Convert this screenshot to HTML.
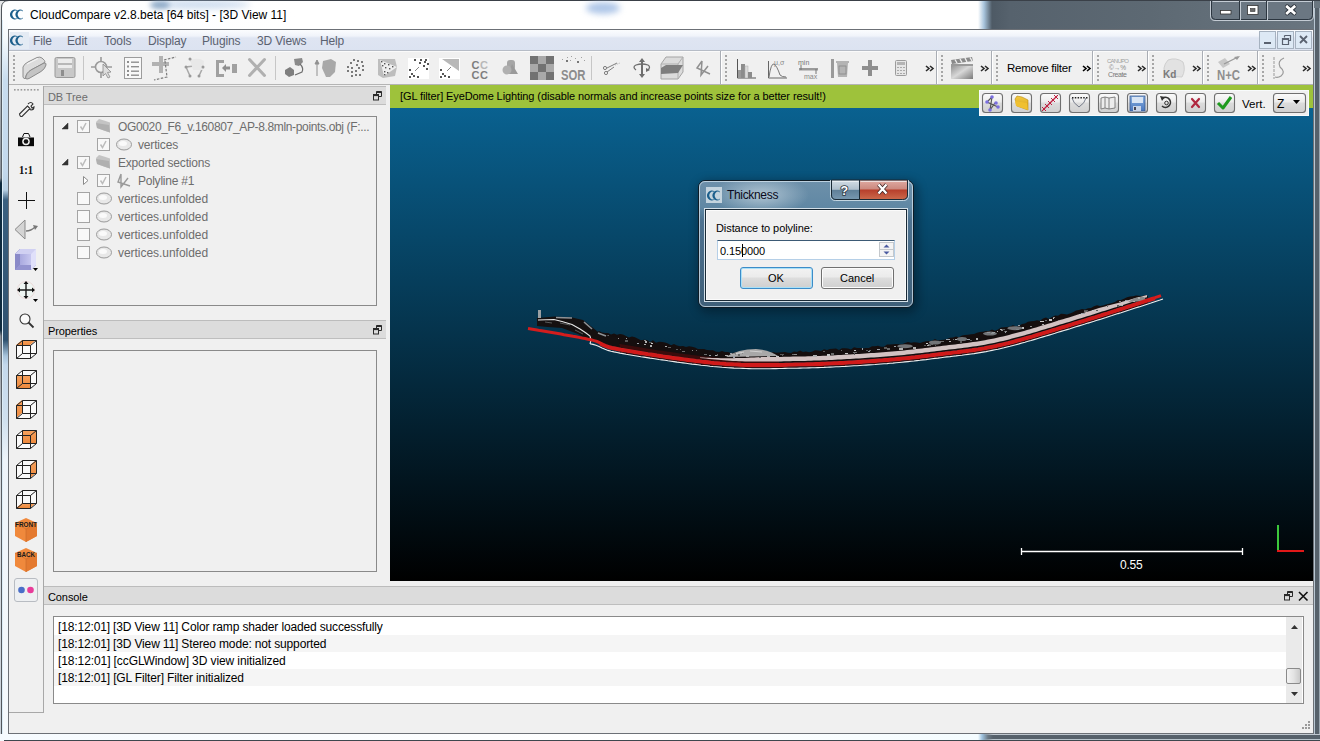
<!DOCTYPE html>
<html><head><meta charset="utf-8">
<style>
*{box-sizing:border-box;margin:0;padding:0}
html,body{width:1320px;height:741px;overflow:hidden;background:#f4f8fc;font-family:"Liberation Sans",sans-serif;font-size:11px;color:#000}
.a{position:absolute}
.t{position:absolute;white-space:nowrap;line-height:1}
</style></head><body>
<!-- desktop / frame -->
<div class="a" style="left:0;top:0;width:1320px;height:741px;background:linear-gradient(90deg,#fdfeff 0,#ffffff 300px,#ffffff 978px,#a8c4dc 984px,#4e5a65 992px,#56626d 1010px,#5d6973 1150px,#6a7680 1320px)"></div>
<div class="a" style="left:0;top:0;width:1px;height:741px;background:linear-gradient(180deg,#e4e6e8 0,#a0a6ac 120px,#8a9098 178px,#0e2a3e 183px,#0e2a3e 330px,#8a9098 336px,#c0c6cc 420px,#d8dde2 500px,#c8d0d8 741px)"></div>
<div class="a" style="left:1px;top:0;width:1px;height:741px;background:linear-gradient(180deg,#50555a 0,#5a6068 178px,#0e2a3e 183px,#0e2a3e 330px,#5a6068 336px,#50555a 741px)"></div>
<svg class="a" style="left:0;top:0" width="9" height="9" viewBox="0 0 9 9"><path d="M0,0 H9 V0.5 Q1.5,0.5 1.5,8 V9 H0 Z" fill="#e4e6e8"/><path d="M9,0.5 Q1.5,0.5 1.5,8 V9" fill="none" stroke="#50555a" stroke-width="1"/></svg>
<div class="a" style="left:2px;top:20px;width:1px;height:714px;background:#dcecf6"></div><div class="a" style="left:3px;top:20px;width:5px;height:714px;background:linear-gradient(180deg,#fbfdff 0,#f4f9fc 20px,#c8dcee 60px,#c4d8ec 150px,#b8d0e4 170px,#3a6080 180px,#2f5270 320px,#a8c4dc 336px,#c4d8ec 345px,#d0e0ee 400px,#eef4fa 440px,#f6fafd 714px)"></div>
<div class="a" style="left:0;top:0;width:1320px;height:1px;background:#3a4048"></div>
<div class="a" style="left:1314px;top:8px;width:6px;height:726px;background:linear-gradient(90deg,#b8c6d2 0,#b8c6d2 1px,#56616b 1px,#56616b 5px,#9aa6b0 5px)"></div>
<div class="a" style="left:0;top:734px;width:1320px;height:7px;background:linear-gradient(90deg,#f6fbff 0,#ffffff 640px,#f4fcff 978px,#a0c4e0 982px,#6a7884 988px,#56616b 993px,#56616b 1320px)"></div>
<div class="a" style="left:983px;top:734px;width:337px;height:1px;background:linear-gradient(90deg,rgba(190,200,210,0),#c0c8d0 10px)"></div>
<div class="a" style="left:983px;top:739px;width:337px;height:1px;background:linear-gradient(90deg,rgba(190,200,210,0),#b8c4cc 10px)"></div>
<div class="a" style="left:4px;top:740px;width:1316px;height:1px;background:#3e474e"></div>

<!-- title bar -->
<div class="a" style="left:150px;top:0px;width:100px;height:9px;border-radius:50%;background:rgba(170,195,225,0.55);filter:blur(3px)"></div>
<div class="a" style="left:150px;top:1px;width:20px;height:8px;border-radius:50%;background:rgba(90,130,170,0.6);filter:blur(2.5px)"></div>
<div class="a" style="left:586px;top:2px;width:34px;height:12px;border-radius:50%;background:rgba(160,188,228,0.85);filter:blur(3px)"></div>
<svg width="0" height="0" style="position:absolute"><defs><symbol id="cc" viewBox="0 0 15 11"><path d="M7.4,1.2 A4.5,5 0 1 0 7.4,8.8 L7.4,7.9 A3.1,3.9 0 1 1 7.4,2.1 Z" fill="#1b5f8c" transform="translate(0.2,0.5)"/><path d="M7.4,1.2 A4.5,5 0 1 0 7.4,8.8 L7.4,7.9 A3.1,3.9 0 1 1 7.4,2.1 Z" fill="#1b5f8c" transform="translate(5.6,0.5)"/></symbol></defs></svg>
<svg class="a" style="left:10px;top:9px" width="15" height="11"><use href="#cc"/></svg>
<svg class="a" style="left:1208px;top:0" width="108" height="23" viewBox="1208 0 108 23">
<path d="M1210.5,1 V16 Q1210.5,20.5 1215,20.5 H1309 Q1313.5,20.5 1313.5,16 V1" fill="#6b7782" stroke="#c4ccd4" stroke-width="1"/>
<path d="M1211.5,1 V15.5 Q1211.5,19.5 1215.5,19.5 H1308.5 Q1312.5,19.5 1312.5,15.5 V1" fill="none" stroke="#2c3640" stroke-width="1"/>
<path d="M1212.5,1.5 H1312" stroke="#c4ccd4" stroke-width="1"/>
<rect x="1239" y="1" width="1" height="19" fill="#2c3640"/><rect x="1240" y="1" width="1" height="19" fill="#c4ccd4"/>
<rect x="1266" y="1" width="1" height="19" fill="#2c3640"/><rect x="1267" y="1" width="1" height="19" fill="#c4ccd4"/>
<rect x="1220.5" y="10.5" width="10.5" height="3.5" fill="#fff" stroke="#333" stroke-width=".8"/>
<rect x="1247.5" y="5.5" width="10.5" height="9" fill="#fff" stroke="#333" stroke-width=".8"/><rect x="1250.5" y="8.5" width="4.5" height="3" fill="#6a6a6a" stroke="#333" stroke-width=".6"/>
<path d="M1287.2,6.8 L1294.2,13 M1294.2,6.8 L1287.2,13" stroke="#2a3038" stroke-width="4.6" stroke-linecap="round"/>
<path d="M1287.2,6.8 L1294.2,13 M1294.2,6.8 L1287.2,13" stroke="#fff" stroke-width="2.8" stroke-linecap="square"/>
</svg>
<div class="t" style="left:30px;top:9px;font-size:12px;color:#000">CloudCompare v2.8.beta [64 bits] - [3D View 11]</div>

<!-- MDI window -->
<div class="a" style="left:8px;top:29px;width:1306px;height:705px;border:1px solid #6c7076;background:#f0f0f0"></div>
<!-- menu bar -->
<div class="a" style="left:9px;top:30px;width:1304px;height:20px;background:linear-gradient(180deg,#fbfcfe 0,#f0f3fa 6px,#dfe5f2 8px,#dce3f1 20px)"></div>
<div class="a" style="left:9px;top:50px;width:1304px;height:1px;background:#b6bcc6"></div>
<div class="a" style="left:10px;top:32px;width:19px;height:17px;background:#e4ebf4"></div>
<svg class="a" style="left:10px;top:35px" width="15" height="11"><use href="#cc"/></svg>
<svg class="a" style="left:1258px;top:30px" width="55" height="20" viewBox="1258 30 55 20">
<rect x="1259.5" y="31.5" width="16" height="17" fill="#dde9f5" stroke="#a6b2c0"/>
<rect x="1277.5" y="31.5" width="16" height="17" fill="#dde9f5" stroke="#a6b2c0"/>
<rect x="1295.5" y="31.5" width="16" height="17" fill="#dde9f5" stroke="#a6b2c0"/>
<rect x="1264" y="42" width="7" height="2" fill="#5a6270"/>
<path d="M1284.5,35.5 H1290.5 V40.5 H1288.5 M1284.5,37.5 V35.5 M1282.5,38.5 H1288.5 V44.5 H1282.5 Z M1282.5,39.5 H1288.5" stroke="#5a6270" stroke-width="1.2" fill="none"/>
<path d="M1300,36 L1307,43 M1307,36 L1300,43" stroke="#5a6270" stroke-width="1.8"/>
</svg>
<div class="t" style="left:33px;top:35px;font-size:12px;letter-spacing:-0.15px;color:#5b6270">File</div>
<div class="t" style="left:67px;top:35px;font-size:12px;letter-spacing:-0.15px;color:#5b6270">Edit</div>
<div class="t" style="left:104px;top:35px;font-size:12px;letter-spacing:-0.15px;color:#5b6270">Tools</div>
<div class="t" style="left:148px;top:35px;font-size:12px;letter-spacing:-0.15px;color:#5b6270">Display</div>
<div class="t" style="left:202px;top:35px;font-size:12px;letter-spacing:-0.15px;color:#5b6270">Plugins</div>
<div class="t" style="left:257px;top:35px;font-size:12px;letter-spacing:-0.15px;color:#5b6270">3D Views</div>
<div class="t" style="left:320px;top:35px;font-size:12px;letter-spacing:-0.15px;color:#5b6270">Help</div>

<!-- toolbar -->
<div class="a" style="left:9px;top:51px;width:1304px;height:33px;background:#f0f0f0"></div>
<div class="a" style="left:9px;top:84px;width:1304px;height:1px;background:#b4b4b4"></div>
<svg class="a" style="left:0;top:0" width="1320" height="90" viewBox="0 0 1320 90">
<defs>
<pattern id="gripx" width="4" height="4" patternUnits="userSpaceOnUse" x="0" y="55"><rect x="0" y="0" width="2" height="2" fill="#9a9a9a"/><rect x="0" y="2" width="1" height="1" fill="#fff"/></pattern>
<linearGradient id="gfold" x1="0" y1="0" x2="0" y2="1"><stop offset="0" stop-color="#e6e6e6"/><stop offset="1" stop-color="#a6a6a6"/></linearGradient>
<linearGradient id="gclap" x1="0" y1="0" x2="1" y2="1"><stop offset="0" stop-color="#8a8a8a"/><stop offset=".5" stop-color="#d8d8d8"/><stop offset="1" stop-color="#7a7a7a"/></linearGradient>
</defs>
<!-- toolbar top white line -->
<rect x="9" y="51" width="1304" height="1" fill="#fafafa"/>
<!-- toolbar boundaries -->
<g fill="#a9adb4">
<rect x="720" y="51" width="1" height="33"/><rect x="936" y="51" width="1" height="33"/><rect x="991" y="51" width="1" height="33"/><rect x="1092" y="51" width="1" height="33"/><rect x="1147" y="51" width="1" height="33"/><rect x="1202" y="51" width="1" height="33"/><rect x="1257" y="51" width="1" height="33"/>
</g>
<g fill="#ffffff">
<rect x="721" y="52" width="1" height="32"/><rect x="937" y="52" width="1" height="32"/><rect x="992" y="52" width="1" height="32"/><rect x="1093" y="52" width="1" height="32"/><rect x="1148" y="52" width="1" height="32"/><rect x="1203" y="52" width="1" height="32"/><rect x="1258" y="52" width="1" height="32"/>
</g>
<!-- grips -->
<g fill="#a6a6a6">
<path d="M13 55h2v2h-2zM13 59h2v2h-2zM13 63h2v2h-2zM13 67h2v2h-2zM13 71h2v2h-2zM13 75h2v2h-2zM13 79h2v2h-2z"/>
<path d="M725 55h2v2h-2zM725 59h2v2h-2zM725 63h2v2h-2zM725 67h2v2h-2zM725 71h2v2h-2zM725 75h2v2h-2zM725 79h2v2h-2z"/>
<path d="M941 55h2v2h-2zM941 59h2v2h-2zM941 63h2v2h-2zM941 67h2v2h-2zM941 71h2v2h-2zM941 75h2v2h-2zM941 79h2v2h-2z"/>
<path d="M996 55h2v2h-2zM996 59h2v2h-2zM996 63h2v2h-2zM996 67h2v2h-2zM996 71h2v2h-2zM996 75h2v2h-2zM996 79h2v2h-2z"/>
<path d="M1097 55h2v2h-2zM1097 59h2v2h-2zM1097 63h2v2h-2zM1097 67h2v2h-2zM1097 71h2v2h-2zM1097 75h2v2h-2zM1097 79h2v2h-2z"/>
<path d="M1152 55h2v2h-2zM1152 59h2v2h-2zM1152 63h2v2h-2zM1152 67h2v2h-2zM1152 71h2v2h-2zM1152 75h2v2h-2zM1152 79h2v2h-2z"/>
<path d="M1207 55h2v2h-2zM1207 59h2v2h-2zM1207 63h2v2h-2zM1207 67h2v2h-2zM1207 71h2v2h-2zM1207 75h2v2h-2zM1207 79h2v2h-2z"/>
<path d="M1262 55h2v2h-2zM1262 59h2v2h-2zM1262 63h2v2h-2zM1262 67h2v2h-2zM1262 71h2v2h-2zM1262 75h2v2h-2zM1262 79h2v2h-2z"/>
</g>
<!-- separators inside first toolbar -->
<g fill="#c6c6c6"><rect x="83" y="56" width="1" height="24"/><rect x="275" y="56" width="1" height="24"/><rect x="591" y="56" width="1" height="24"/></g>
<!-- folder -->
<path d="M23 67 Q24 64 28 62 L37 57.5 Q40 56.5 42 58 L44.5 60.5 Q45.5 62 44 63 L31 70 Q26 73 25.5 78.5 Q23.5 79 23 77 Z" fill="#dcdcdc" stroke="#8e8e8e" stroke-width="1"/>
<path d="M25.5 78.5 Q26 73 31 70 L44 63 Q46.5 62.5 46 65 Q45 69 41 71.5 L29 78.5 Q27 79.5 25.5 78.5 Z" fill="#c4c4c4" stroke="#8a8a8a" stroke-width="1"/>
<path d="M27 64 L38 58.5" stroke="#f4f4f4" stroke-width="1.2"/>
<!-- save -->
<rect x="55" y="57.5" width="20" height="20" rx="1.5" fill="#c8c8c8" stroke="#9a9a9a"/>
<rect x="58" y="59" width="14" height="9" fill="#ececec"/>
<rect x="58" y="63" width="14" height="2" fill="#b8b8b8"/>
<rect x="61" y="70" width="3" height="6" fill="#8e8e8e"/>
<!-- pick -->
<g stroke="#9a9a9a" fill="none" stroke-width="1.6"><circle cx="101" cy="67" r="5.5"/><path d="M101 57v5M101 72v6M91 67h4M107 67h5"/></g>
<path d="M103 64 L111 72 L107.5 72.5 L110 77 L108 78 L105.5 73.5 L103 76 Z" fill="#ddd" stroke="#8a8a8a" stroke-width="0.8"/>
<!-- list -->
<rect x="124.5" y="57.5" width="17" height="21" fill="#f8f8f8" stroke="#9c9c9c"/>
<g fill="#8e8e8e"><rect x="127" y="61" width="2" height="2"/><rect x="127" y="65.5" width="2" height="2"/><rect x="127" y="70" width="2" height="2"/><rect x="127" y="74" width="2" height="2"/>
<rect x="131" y="61.5" width="8" height="1.4"/><rect x="131" y="66" width="8" height="1.4"/><rect x="131" y="70.5" width="8" height="1.4"/><rect x="131" y="74.5" width="8" height="1.4"/></g>
<!-- plus dashed -->
<path d="M159 56h4v6h6v4h-6v7h-4v-7h-7v-4h7z" fill="#b2b2b2"/>
<path d="M164 60 L176 57 M165 61 L167 77 L154 80" stroke="#7c7c7c" stroke-width="1.2" stroke-dasharray="2.5 1.5" fill="none"/>
<!-- sheep-ish network -->
<g stroke="#a8a8a8" stroke-width="1.5" fill="none"><path d="M190 59 L195 66 L186 67 L190 76 M195 66 L203 67 L199 76"/></g>
<path d="M190 60 Q199 57 204 61 L203 70 L193 70 Z" fill="#e8e8e8"/>
<g fill="#9a9a9a"><circle cx="190" cy="59" r="1.5"/><circle cx="186" cy="67" r="1.5"/><circle cx="203" cy="67" r="1.5"/><circle cx="190" cy="76" r="1.5"/><circle cx="199" cy="76" r="1.5"/></g>
<!-- bracket arrow -->
<path d="M216 60h8v3h-5v11h5v3h-8z" fill="#a0a0a0"/>
<path d="M222 68 L226 64 L226 66.5 L230 66.5 L230 69.5 L226 69.5 L226 72 Z" fill="#8e8e8e"/>
<rect x="232" y="64" width="5" height="9" fill="#a0a0a0"/>
<!-- X -->
<path d="M249.5 59.5 L264.5 75.5 M264.5 59.5 L249.5 75.5" stroke="#b0b0b0" stroke-width="3" stroke-linecap="round"/>
<!-- blob arrow -->
<path d="M294 59 L302 58 L303 62 L299 66 L295 65 Z" fill="#8a8a8a"/>
<path d="M285 70 L290 67 L294 70 L294 75 L289 77 L285 74 Z" fill="#7e7e7e"/>
<path d="M300 64 Q304 68 302 72 L295 75" stroke="#6e6e6e" stroke-width="1.2" fill="none"/>
<!-- arrow + blob -->
<path d="M317 60 L315 64 L319 64 Z M317 63 V76" stroke="#909090" stroke-width="1" fill="#909090"/>
<path d="M323 61 L331 59 L336 62 L335 72 L330 77 L326 77 L322 68 Z" fill="#a8a8a8"/>
<!-- dots circle -->
<g fill="#7a7a7a"><rect x="353" y="59" width="2" height="2"/><rect x="357" y="60" width="2" height="2"/><rect x="350" y="62" width="2" height="2"/><rect x="361" y="61" width="2" height="2"/><rect x="356" y="64" width="2" height="2"/><rect x="347" y="66" width="2" height="2"/><rect x="362" y="65" width="2" height="2"/><rect x="351" y="67" width="2" height="2"/><rect x="358" y="67" width="2" height="2"/><rect x="347" y="70" width="2" height="2"/><rect x="355" y="70" width="2" height="2"/><rect x="362" y="69" width="2" height="2"/><rect x="351" y="71" width="2" height="2"/><rect x="351" y="75" width="2" height="2"/><rect x="355" y="74" width="2" height="2"/><rect x="359" y="74" width="2" height="2"/></g>
<!-- triangle box -->
<path d="M378 59 L395 59 L397 67 L395 76 L383 78 L378 75 Z" fill="#bdbdbd"/>
<path d="M380 60 L397 67 L384 76 Z" fill="#efefef"/>
<g fill="#555"><rect x="381" y="61" width="1.4" height="1.4"/><rect x="384" y="63" width="1.4" height="1.4"/><rect x="388" y="64" width="1.4" height="1.4"/><rect x="392" y="66" width="1.4" height="1.4"/><rect x="382" y="65" width="1.4" height="1.4"/><rect x="385" y="67" width="1.4" height="1.4"/><rect x="389" y="68" width="1.4" height="1.4"/><rect x="384" y="71" width="1.4" height="1.4"/><rect x="387" y="72" width="1.4" height="1.4"/><rect x="384" y="74" width="1.4" height="1.4"/></g>
<!-- white dots squares -->
<rect x="408" y="58" width="21" height="21" fill="#fff"/>
<rect x="439" y="58" width="21" height="21" fill="#fff"/>
<path d="M442 59 L459 59 L459 71 Z" fill="#b8b8b8"/>
<g fill="#555"><rect x="414" y="59" width="2" height="2"/><rect x="420" y="59" width="2" height="2"/><rect x="425" y="59" width="2" height="2"/><rect x="419" y="62" width="2" height="2"/><rect x="424" y="61" width="2" height="2"/><rect x="427" y="63" width="2" height="2"/><rect x="423" y="65" width="2" height="2"/><rect x="426" y="68" width="2" height="2"/><rect x="409" y="69" width="2" height="2"/><rect x="411" y="73" width="2" height="2"/><rect x="409" y="76" width="2" height="2"/><rect x="413" y="75" width="2" height="2"/><rect x="417" y="76" width="2" height="2"/>
<rect x="440" y="69" width="2" height="2"/><rect x="442" y="73" width="2" height="2"/><rect x="440" y="76" width="2" height="2"/><rect x="444" y="75" width="2" height="2"/><rect x="448" y="76" width="2" height="2"/></g>
<path d="M415 71 L419 67 M447 71 L451 67" stroke="#888" stroke-width="1"/>
<!-- CCCC -->
<text x="471.5" y="68.5" font-family="Liberation Sans" font-weight="bold" font-size="11" fill="#7e7e7e">C</text><text x="480" y="68.5" font-family="Liberation Sans" font-weight="bold" font-size="11" fill="#b8b8b8">C</text>
<text x="471.5" y="78.5" font-family="Liberation Sans" font-weight="bold" font-size="11" fill="#7e7e7e" letter-spacing="0.5">CC</text>
<!-- shapes -->
<rect x="507" y="60" width="8" height="10" rx="3" fill="#a6a6a6"/>
<path d="M512 64 L518 74 L508 74 Z" fill="#9a9a9a"/>
<circle cx="507" cy="70" r="4.5" fill="#b0b0b0"/>
<!-- checker -->
<g><rect x="530" y="56" width="24" height="24" fill="#a9a9a9"/><g fill="#727272"><rect x="530" y="56" width="8" height="8"/><rect x="546" y="56" width="8" height="8"/><rect x="538" y="64" width="8" height="8"/><rect x="530" y="72" width="8" height="8"/><rect x="546" y="72" width="8" height="8"/></g></g>
<!-- SOR -->
<text x="561" y="79.5" font-family="Liberation Sans" font-weight="bold" font-size="15" fill="#8c8c8c" textLength="24.5" lengthAdjust="spacingAndGlyphs">SOR</text>
<g fill="#a0a0a0"><rect x="562" y="59" width="1" height="1"/><rect x="567" y="57" width="1" height="1"/><rect x="571" y="56" width="1" height="1"/><rect x="575" y="58" width="1" height="1"/><rect x="581" y="57" width="1" height="1"/><rect x="584" y="60" width="1" height="1"/><rect x="570" y="60" width="1" height="1"/></g>
<path d="M566 60l2 2m0-2l-2 2M577 61l2 2m0-2l-2 2" stroke="#777" stroke-width="1"/>
<!-- scissors -->
<g stroke="#7e7e7e" stroke-width="1" fill="none"><circle cx="605" cy="68" r="1.6"/><circle cx="606" cy="73" r="1.6"/><path d="M607 68 L617 63 M607 72 L614 67"/></g>
<path d="M615 65 L620 63" stroke="#b0b0b0" stroke-dasharray="1 1"/>
<!-- rotate move -->
<path d="M642 58 L639 62 H641 V74 H639 L642 78 L645 74 H643 V62 H645 Z" fill="#6e6e6e"/>
<path d="M636 70 Q632 67 636 65 Q642 63 648 65 Q651 67 648 70" stroke="#6e6e6e" stroke-width="1.3" fill="none"/>
<path d="M646 68 L650 70 L646 72 Z" fill="#6e6e6e"/>
<!-- box section -->
<path d="M661 64 L666 57 L683 57 L683 72 L678 79 L661 79 Z" fill="#dcdcdc" stroke="#a4a4a4" stroke-width="1"/>
<path d="M661 64 L678 64 L683 57 M678 64 V79" stroke="#b0b0b0" fill="none"/>
<path d="M661 68 L666 65 L683 65 L678 73 L661 74 Z" fill="#7e7e7e"/>
<!-- polyline -->
<path d="M702 61 L697 68 L710 74 M702 61 L701 75 L708 66" stroke="#909090" stroke-width="1.5" fill="none"/>
<!-- histogram -->
<path d="M737.5 59 V78 H756" stroke="#555" stroke-width="1" fill="none"/>
<rect x="738" y="70" width="3" height="8" fill="#9a9a9a"/><rect x="741" y="64" width="4" height="14" fill="#8c8c8c"/><rect x="745" y="66" width="3" height="12" fill="#dcdcdc" stroke="#aaa" stroke-width=".5"/><rect x="748" y="72" width="4" height="6" fill="#8c8c8c"/>
<!-- gaussian -->
<path d="M768.5 61 V78 H787" stroke="#666" stroke-width="1" fill="none"/>
<path d="M769 77 Q771 63 774 64 Q777 66 780 75 Q782 77 786 77" stroke="#777" stroke-width="1" fill="none"/>
<text x="774" y="65" font-family="Liberation Sans" font-size="7" fill="#888">μ,σ</text>
<!-- min max -->
<text x="798" y="65" font-family="Liberation Sans" font-size="7" fill="#777">min</text>
<text x="804" y="79" font-family="Liberation Sans" font-size="7" fill="#888">max</text>
<rect x="799" y="68" width="19" height="2.5" fill="#9a9a9a"/><path d="M801 65 V70 M816 69 V74" stroke="#777"/>
<!-- trash -->
<rect x="831" y="59" width="3" height="19" fill="#9a9a9a"/>
<path d="M836 61 H849 V63 H848 L847 77 H838 L837 63 H836 Z" fill="#b4b4b4"/>
<rect x="839" y="66" width="7" height="8" fill="none" stroke="#888" stroke-width=".8"/>
<!-- plus -->
<path d="M868 60h4v6h6v4h-6v6h-4v-6h-6v-4h6z" fill="#8e8e8e"/>
<!-- calculator -->
<rect x="895.5" y="60.5" width="11" height="15" rx="1" fill="#e6e6e6" stroke="#9c9c9c"/>
<rect x="897" y="62" width="8" height="3" fill="#b4b4b4"/>
<g fill="#aaa"><rect x="897" y="67" width="2" height="1"/><rect x="900" y="67" width="2" height="1"/><rect x="903" y="67" width="2" height="1"/><rect x="897" y="70" width="2" height="1"/><rect x="900" y="70" width="2" height="1"/><rect x="903" y="70" width="2" height="1"/><rect x="897" y="73" width="2" height="1"/><rect x="900" y="73" width="2" height="1"/><rect x="903" y="73" width="2" height="1"/></g>
<!-- chevrons -->
<g stroke="#2a2a2a" stroke-width="1.6" fill="none">
<path d="M926 66 L929 68.5 L926 71 M930 66 L933 68.5 L930 71"/>
<path d="M981 66 L984 68.5 L981 71 M985 66 L988 68.5 L985 71"/>
<path d="M1083 66 L1086 68.5 L1083 71 M1087 66 L1090 68.5 L1087 71" stroke="#000"/>
<path d="M1138 66 L1141 68.5 L1138 71 M1142 66 L1145 68.5 L1142 71"/>
<path d="M1193 66 L1196 68.5 L1193 71 M1197 66 L1200 68.5 L1197 71"/>
<path d="M1248 66 L1251 68.5 L1248 71 M1252 66 L1255 68.5 L1252 71"/>
<path d="M1303 66 L1306 68.5 L1303 71 M1307 66 L1310 68.5 L1307 71"/>
</g>
<!-- clapper -->
<rect x="951" y="64" width="22" height="15" fill="url(#gclap)"/>
<path d="M951 60 L972 57 L973 61 L952 64 Z" fill="#8a8a8a"/>
<path d="M955 59.5 L957 63 M960 59 L962 62.5 M965 58 L967 62 M970 57.5 L972 61" stroke="#eee" stroke-width="1.4"/>
<path d="M951 64 H973 V66 H951 Z" fill="#9a9a9a"/>
<!-- CANUPO -->
<text x="1107" y="63" font-family="Liberation Sans" font-size="6" fill="#a0a0a0" textLength="22">CANUPO</text>
<text x="1109" y="70" font-family="Liberation Sans" font-size="6.5" fill="#888">©→%</text>
<text x="1108" y="77" font-family="Liberation Sans" font-size="7" fill="#777" textLength="19">Create</text>
<!-- Kd -->
<path d="M1168 60 Q1176 57 1183 62 Q1186 70 1182 77 L1166 76 Q1161 68 1168 60 Z" fill="#e2e2e2" stroke="#cfcfcf"/>
<text x="1163" y="78" font-family="Liberation Sans" font-weight="bold" font-size="10" fill="#7a7a7a">Kd</text>
<!-- N+C -->
<path d="M1218 62 L1225 58 L1230 64 L1223 68 Z" fill="#c8c8c8"/>
<path d="M1224 64 L1238 57" stroke="#999" stroke-width="1.3"/><path d="M1240 56 L1234 57 L1237 60 Z" fill="#999"/>
<text x="1217" y="80" font-family="Liberation Sans" font-weight="bold" font-size="15" fill="#8e8e8e" textLength="23" lengthAdjust="spacingAndGlyphs">N+C</text>
<!-- S curve -->
<path d="M1274 57 V79" stroke="#9a9a9a" stroke-width="1" stroke-dasharray="3 1"/>
<path d="M1284 58 Q1277 61 1280 67 Q1286 72 1281 76 Q1278 78 1275 77" stroke="#999" stroke-width="1.2" fill="none"/>
</svg>
<div class="t" style="left:1007px;top:63px;font-size:11.5px;letter-spacing:-0.25px;color:#000">Remove filter</div>

<!-- left toolbar -->
<div class="a" style="left:43px;top:86px;width:1px;height:627px;background:#a8a8a8"></div>
<div class="a" style="left:9px;top:712px;width:35px;height:1px;background:#a8a8a8"></div>
<svg class="a" style="left:0;top:80px" width="46" height="640" viewBox="0 80 46 640">
<defs><linearGradient id="gor" x1="0" y1="0" x2="0" y2="1"><stop offset="0" stop-color="#f7a25e"/><stop offset="1" stop-color="#ee8a3e"/></linearGradient>
<linearGradient id="gcube" x1="0" y1="0" x2="1" y2="1"><stop offset="0" stop-color="#c8c8f0"/><stop offset="1" stop-color="#8a8ad0"/></linearGradient></defs>
<g fill="#9a9a9a"><rect x="14.0" y="89" width="1.6" height="1.6"/><rect x="17.3" y="89" width="1.6" height="1.6"/><rect x="20.6" y="89" width="1.6" height="1.6"/><rect x="23.9" y="89" width="1.6" height="1.6"/><rect x="27.2" y="89" width="1.6" height="1.6"/><rect x="30.5" y="89" width="1.6" height="1.6"/><rect x="33.8" y="89" width="1.6" height="1.6"/><rect x="37.1" y="89" width="1.6" height="1.6"/></g>
<path d="M21 115 L29 107 M28 104 Q31 101 33 104 L31 106 L32 108 L34 107 Q34 110 31 110 L29 109" stroke="#333" stroke-width="1.1" fill="#f8f8f8"/><path d="M19.5 114 L27.5 106 L30 108.5 L22 116.5 Q20 117 19.5 114 Z" fill="#f4f4f4" stroke="#333" stroke-width="1.1"/>
<path d="M22.5 137 L24 133.5 H28.5 L30 137" fill="#f4f4f4" stroke="#111" stroke-width="1"/><rect x="18" y="137" width="16" height="9" fill="#0a0a0a"/><rect x="18" y="137" width="16" height="1" fill="#777"/><circle cx="26" cy="141.5" r="3.8" fill="#f0f0f0"/><circle cx="26" cy="141.5" r="2.3" fill="#111"/><rect x="18" y="146" width="16" height="1" fill="#c8c8c8"/>
<text x="19" y="174" font-family="Liberation Serif" font-weight="bold" font-size="12.5" fill="#111" textLength="14" lengthAdjust="spacingAndGlyphs">1:1</text>
<path d="M26.5 192 V209 M18 200.5 H35" stroke="#111" stroke-width="1"/>
<path d="M25 220 L15 229.5 L25 239 Z" fill="#d4d4d4" stroke="#8a8a8a" stroke-width="1"/><path d="M26 231 Q31 231 35 227" stroke="#777" stroke-width="1.3" fill="none"/><path d="M33 225 L38 226 L35 230 Z" fill="#777"/>
<defs><linearGradient id="gpf" x1="0" y1="0" x2="1" y2="0"><stop offset="0" stop-color="#9c9cd8"/><stop offset="1" stop-color="#d4d4f6"/></linearGradient></defs><path d="M15 254 L20 249 H36 V265 L31 270 H15 Z" fill="url(#gpf)"/><path d="M15 254 L20 249 V265 L15 270 Z" fill="#8a8ac8"/><path d="M15 254 L20 249 H36 L31 254 Z" fill="#d0d0f2"/><path d="M20 265 H36 L31 270 H15 Z" fill="#9494d0"/><path d="M31 254 L36 249 V265 L31 270 Z" fill="#e0e0fa"/><path d="M33 268 H38 L35.5 271 Z" fill="#000"/>
<circle cx="26" cy="290" r="8.5" fill="#eef5f2" stroke="#e8c8c8" stroke-width=".6"/><path d="M26 282 V298 M18 290 H34" stroke="#1a1a1a" stroke-width="1.4"/><path d="M26 281 L23.5 284 H28.5 Z M26 299 L23.5 296 H28.5 Z M17 290 L20 287.5 V292.5 Z M35 290 L32 287.5 V292.5 Z" fill="#111"/><path d="M33 299 H38 L35.5 302 Z" fill="#000"/>
<circle cx="25" cy="319" r="5" fill="#fafafa" stroke="#333" stroke-width="1.1"/><path d="M28.5 322.5 L33.5 327.5" stroke="#333" stroke-width="1.8"/>
<rect x="16" y="340" width="20" height="18" fill="#fff" opacity="0"/><polygon points="16,345 22,340 36,340 36,353 30,358 16,358" fill="#fafafa"/><polygon points="16,345 22,340 36,340 30,345" fill="url(#gor)"/><path d="M16.5,345.5 H30.5 V358.5 H16.5 Z M22.5,340.5 H36.5 V353.5 H22.5 Z M16.5,345.5 L22.5,340.5 M30.5,345.5 L36.5,340.5 M30.5,358.5 L36.5,353.5 M16.5,358.5 L22.5,353.5" stroke="#222" stroke-width="1" fill="none"/>
<rect x="16" y="370" width="20" height="18" fill="#fff" opacity="0"/><polygon points="16,375 22,370 36,370 36,383 30,388 16,388" fill="#fafafa"/><polygon points="16,375 30,375 30,388 16,388" fill="url(#gor)"/><path d="M16.5,375.5 H30.5 V388.5 H16.5 Z M22.5,370.5 H36.5 V383.5 H22.5 Z M16.5,375.5 L22.5,370.5 M30.5,375.5 L36.5,370.5 M30.5,388.5 L36.5,383.5 M16.5,388.5 L22.5,383.5" stroke="#222" stroke-width="1" fill="none"/>
<rect x="16" y="400" width="20" height="18" fill="#fff" opacity="0"/><polygon points="16,405 22,400 36,400 36,413 30,418 16,418" fill="#fafafa"/><polygon points="16,405 22,400 22,413 16,418" fill="url(#gor)"/><path d="M16.5,405.5 H30.5 V418.5 H16.5 Z M22.5,400.5 H36.5 V413.5 H22.5 Z M16.5,405.5 L22.5,400.5 M30.5,405.5 L36.5,400.5 M30.5,418.5 L36.5,413.5 M16.5,418.5 L22.5,413.5" stroke="#222" stroke-width="1" fill="none"/>
<rect x="16" y="430" width="20" height="18" fill="#fff" opacity="0"/><polygon points="16,435 22,430 36,430 36,443 30,448 16,448" fill="#fafafa"/><polygon points="22,430 36,430 36,443 22,443" fill="url(#gor)"/><path d="M16.5,435.5 H30.5 V448.5 H16.5 Z M22.5,430.5 H36.5 V443.5 H22.5 Z M16.5,435.5 L22.5,430.5 M30.5,435.5 L36.5,430.5 M30.5,448.5 L36.5,443.5 M16.5,448.5 L22.5,443.5" stroke="#222" stroke-width="1" fill="none"/>
<rect x="16" y="460" width="20" height="18" fill="#fff" opacity="0"/><polygon points="16,465 22,460 36,460 36,473 30,478 16,478" fill="#fafafa"/><polygon points="30,465 36,460 36,473 30,478" fill="url(#gor)"/><path d="M16.5,465.5 H30.5 V478.5 H16.5 Z M22.5,460.5 H36.5 V473.5 H22.5 Z M16.5,465.5 L22.5,460.5 M30.5,465.5 L36.5,460.5 M30.5,478.5 L36.5,473.5 M16.5,478.5 L22.5,473.5" stroke="#222" stroke-width="1" fill="none"/>
<rect x="16" y="490" width="20" height="18" fill="#fff" opacity="0"/><polygon points="16,495 22,490 36,490 36,503 30,508 16,508" fill="#fafafa"/><polygon points="16,508 22,503 36,503 30,508" fill="url(#gor)"/><path d="M16.5,495.5 H30.5 V508.5 H16.5 Z M22.5,490.5 H36.5 V503.5 H22.5 Z M16.5,495.5 L22.5,490.5 M30.5,495.5 L36.5,490.5 M30.5,508.5 L36.5,503.5 M16.5,508.5 L22.5,503.5" stroke="#222" stroke-width="1" fill="none"/>
<polygon points="26,518 37,523 37,536 26,542 15,536 15,523" fill="#f0893c"/><polygon points="26,529 37,523 37,536 26,542" fill="#e47a30"/><path d="M15 523 L26 529 L37 523 M26 529 V542" stroke="#c86a2a" stroke-width=".6" fill="none"/><text x="26" y="527" text-anchor="middle" font-family="Liberation Sans" font-weight="bold" font-size="7" fill="#1a1a1a" textLength="22" lengthAdjust="spacingAndGlyphs">FRONT</text>
<polygon points="26,548 37,553 37,566 26,572 15,566 15,553" fill="#f0893c"/><polygon points="26,559 37,553 37,566 26,572" fill="#e47a30"/><path d="M15 553 L26 559 L37 553 M26 559 V572" stroke="#c86a2a" stroke-width=".6" fill="none"/><text x="26" y="557" text-anchor="middle" font-family="Liberation Sans" font-weight="bold" font-size="7" fill="#1a1a1a" textLength="18" lengthAdjust="spacingAndGlyphs">BACK</text>
<rect x="14.5" y="578.5" width="23" height="23" rx="2.5" fill="#eef0f2" stroke="#b8bcc2"/><circle cx="21.5" cy="590" r="3.3" fill="#4a6ec8"/><circle cx="30.5" cy="590" r="3.3" fill="#e83c9a"/>
</svg>

<!-- DB Tree dock -->
<div class="a" style="left:44px;top:86px;width:342px;height:19px;background:#dcdcdc;border-top:1px solid #bcbcbc;border-bottom:1px solid #bebebe"></div>
<div class="t" style="left:48px;top:92px;color:#6d6d6d;letter-spacing:-0.1px">DB Tree</div><svg class="a" style="left:373px;top:91px" width="10" height="10" viewBox="0 0 10 10"><path d="M3.5,3 V0.5 H8.5 V5.5 H6" stroke="#2a2a2a" stroke-width="1" fill="none"/><rect x="3.5" y="0.5" width="5" height="1.5" fill="#2a2a2a"/><rect x="0.5" y="3.5" width="5" height="5.5" fill="none" stroke="#2a2a2a" stroke-width="1"/><rect x="0.5" y="3.5" width="5" height="1.6" fill="#2a2a2a"/></svg>
<div class="a" style="left:53px;top:116px;width:324px;height:190px;border:1px solid #8a8a8a;background:#f0f0f0"></div>
<svg class="a" style="left:53px;top:116px" width="324" height="190" viewBox="53 116 324 190">
<g><path d="M62 129 L68 123 L68 129 Z" fill="#333" stroke="#333" stroke-width=".5" stroke-linejoin="round"/><rect x="77.5" y="120.5" width="12" height="12" fill="#f8f8f8" stroke="#a4a4a4"/><path d="M80.5 126.5 L82.5 129.5 L86 123" stroke="#bcbcbc" stroke-width="1.5" fill="none"/><path d="M96 122 L99 119 L104 120.5 L110 122.5 L110 132.5 L105 131 L97 128 Z" fill="#c4c4c4"/><path d="M96 123 L109 125 L110 132.5 L97 128 Z" fill="#b0b0b0"/><rect x="97.5" y="138.5" width="12" height="12" fill="#f8f8f8" stroke="#a4a4a4"/><path d="M100.5 144.5 L102.5 147.5 L106 141" stroke="#bcbcbc" stroke-width="1.5" fill="none"/><ellipse cx="124" cy="144.5" rx="7.5" ry="5.5" fill="#e8e8e8" stroke="#9a9a9a" stroke-width="1"/><ellipse cx="123" cy="143.5" rx="4" ry="2.5" fill="#fafafa"/><path d="M62 165 L68 159 L68 165 Z" fill="#333" stroke="#333" stroke-width=".5" stroke-linejoin="round"/><rect x="77.5" y="156.5" width="12" height="12" fill="#f8f8f8" stroke="#a4a4a4"/><path d="M80.5 162.5 L82.5 165.5 L86 159" stroke="#bcbcbc" stroke-width="1.5" fill="none"/><path d="M96 158 L99 155 L104 156.5 L110 158.5 L110 168.5 L105 167 L97 164 Z" fill="#c4c4c4"/><path d="M96 159 L109 161 L110 168.5 L97 164 Z" fill="#b0b0b0"/><path d="M83.5 176.5 L88 180.5 L83.5 184.5 Z" fill="#fff" stroke="#8a8a8a" stroke-width="1"/><rect x="97.5" y="174.5" width="12" height="12" fill="#f8f8f8" stroke="#a4a4a4"/><path d="M100.5 180.5 L102.5 183.5 L106 177" stroke="#bcbcbc" stroke-width="1.5" fill="none"/><path d="M121 174 L118 182 L130 186 M121 174 L121 187 L128 178" stroke="#9a9a9a" stroke-width="1.4" fill="none"/><rect x="77.5" y="192.5" width="12" height="12" fill="#f8f8f8" stroke="#a4a4a4"/><ellipse cx="104" cy="198.5" rx="7.5" ry="5.5" fill="#e8e8e8" stroke="#9a9a9a" stroke-width="1"/><ellipse cx="103" cy="197.5" rx="4" ry="2.5" fill="#fafafa"/><rect x="77.5" y="210.5" width="12" height="12" fill="#f8f8f8" stroke="#a4a4a4"/><ellipse cx="104" cy="216.5" rx="7.5" ry="5.5" fill="#e8e8e8" stroke="#9a9a9a" stroke-width="1"/><ellipse cx="103" cy="215.5" rx="4" ry="2.5" fill="#fafafa"/><rect x="77.5" y="228.5" width="12" height="12" fill="#f8f8f8" stroke="#a4a4a4"/><ellipse cx="104" cy="234.5" rx="7.5" ry="5.5" fill="#e8e8e8" stroke="#9a9a9a" stroke-width="1"/><ellipse cx="103" cy="233.5" rx="4" ry="2.5" fill="#fafafa"/><rect x="77.5" y="246.5" width="12" height="12" fill="#f8f8f8" stroke="#a4a4a4"/><ellipse cx="104" cy="252.5" rx="7.5" ry="5.5" fill="#e8e8e8" stroke="#9a9a9a" stroke-width="1"/><ellipse cx="103" cy="251.5" rx="4" ry="2.5" fill="#fafafa"/></g></svg>
<div class="t" style="left:118px;top:121px;font-size:12px;letter-spacing:-0.35px;color:#6d6d6d">OG0020_F6_v.160807_AP-8.8mln-points.obj (F:...</div>
<div class="t" style="left:138px;top:139px;font-size:12px;letter-spacing:-0.17px;color:#6d6d6d">vertices</div>
<div class="t" style="left:118px;top:157px;font-size:12px;letter-spacing:-0.2px;color:#6d6d6d">Exported sections</div>
<div class="t" style="left:138px;top:175px;font-size:12px;letter-spacing:-0.24px;color:#6d6d6d">Polyline #1</div>
<div class="t" style="left:118px;top:193px;font-size:12px;letter-spacing:-0.04px;color:#6d6d6d">vertices.unfolded</div>
<div class="t" style="left:118px;top:211px;font-size:12px;letter-spacing:-0.04px;color:#6d6d6d">vertices.unfolded</div>
<div class="t" style="left:118px;top:229px;font-size:12px;letter-spacing:-0.04px;color:#6d6d6d">vertices.unfolded</div>
<div class="t" style="left:118px;top:247px;font-size:12px;letter-spacing:-0.04px;color:#6d6d6d">vertices.unfolded</div>

<!-- Properties dock -->
<div class="a" style="left:44px;top:320px;width:342px;height:19px;background:#dcdcdc;border-top:1px solid #bcbcbc;border-bottom:1px solid #bebebe"></div>
<div class="t" style="left:48px;top:326px;color:#000;letter-spacing:-0.1px">Properties</div><svg class="a" style="left:373px;top:325px" width="10" height="10" viewBox="0 0 10 10"><path d="M3.5,3 V0.5 H8.5 V5.5 H6" stroke="#2a2a2a" stroke-width="1" fill="none"/><rect x="3.5" y="0.5" width="5" height="1.5" fill="#2a2a2a"/><rect x="0.5" y="3.5" width="5" height="5.5" fill="none" stroke="#2a2a2a" stroke-width="1"/><rect x="0.5" y="3.5" width="5" height="1.6" fill="#2a2a2a"/></svg>
<div class="a" style="left:53px;top:350px;width:324px;height:222px;border:1px solid #8a8a8a;background:#f0f0f0"></div>

<!-- 3D view -->
<div class="a" style="left:390px;top:85px;width:923px;height:496px;background:linear-gradient(180deg,rgb(10,102,151),#000)"></div>
<svg class="a" style="left:390px;top:85px" width="923" height="496" viewBox="390 85 923 496">
<polygon points="590.0,334.0 593.0,332.6 596.0,332.9 599.0,330.9 602.0,332.6 605.0,333.1 608.0,333.0 611.0,334.5 614.0,333.6 617.0,334.7 620.0,334.0 623.0,334.6 626.0,336.0 629.0,337.6 632.0,336.5 635.0,337.3 638.0,338.8 641.0,340.2 644.0,339.8 647.0,339.9 650.0,341.9 653.0,340.2 656.0,342.7 659.0,341.8 662.0,342.0 665.0,342.5 668.0,343.4 671.0,345.2 674.0,344.1 677.0,345.6 680.0,346.2 683.0,346.1 686.0,346.9 689.0,346.3 692.0,346.7 695.0,347.5 698.0,349.1 701.0,348.9 704.0,349.1 707.0,350.1 710.0,350.2 713.0,350.2 716.0,351.8 719.0,351.9 722.0,351.0 725.0,352.0 728.0,352.1 731.0,353.0 734.0,352.8 737.0,351.9 740.0,353.6 743.0,351.6 746.0,352.4 749.0,353.3 752.0,351.8 755.0,352.6 758.0,351.5 761.0,353.0 764.0,353.2 767.0,352.7 770.0,353.3 773.0,351.9 776.0,352.8 779.0,352.4 782.0,352.3 785.0,351.9 788.0,352.7 791.0,352.9 794.0,351.6 797.0,352.0 800.0,350.4 803.0,351.9 806.0,351.6 809.0,352.3 812.0,351.7 815.0,350.3 818.0,350.4 821.0,350.9 824.0,349.2 827.0,350.0 830.0,349.1 833.0,348.8 836.0,348.5 839.0,350.0 842.0,348.2 845.0,348.3 848.0,348.4 851.0,349.4 854.0,347.2 857.0,347.9 860.0,347.9 863.0,348.4 866.0,348.0 869.0,347.9 872.0,346.2 875.0,346.3 878.0,345.8 881.0,346.8 884.0,346.8 887.0,344.6 890.0,344.4 893.0,344.2 896.0,343.9 899.0,344.3 902.0,344.2 905.0,343.1 908.0,342.1 911.0,342.8 914.0,342.3 917.0,342.5 920.0,343.0 923.0,342.0 926.0,341.2 929.0,341.1 932.0,340.8 935.0,338.9 938.0,340.6 941.0,339.9 944.0,339.7 947.0,339.1 950.0,337.8 953.0,337.4 956.0,336.4 959.0,337.3 962.0,335.4 965.0,335.0 968.0,334.8 971.0,334.2 974.0,334.1 977.0,332.8 980.0,332.1 983.0,331.8 986.0,331.1 989.0,331.0 992.0,329.5 995.0,330.8 998.0,329.4 1001.0,327.6 1004.0,327.3 1007.0,326.9 1010.0,326.4 1013.0,325.2 1016.0,326.3 1019.0,326.0 1022.0,324.1 1025.0,323.5 1028.0,321.8 1031.0,321.2 1034.0,321.1 1037.0,320.2 1040.0,320.8 1043.0,318.5 1046.0,317.4 1049.0,318.9 1052.0,317.1 1055.0,315.5 1058.0,315.7 1061.0,313.7 1064.0,314.1 1067.0,314.5 1070.0,313.4 1073.0,312.3 1076.0,310.5 1079.0,310.1 1082.0,308.9 1085.0,309.6 1088.0,308.3 1091.0,308.1 1094.0,306.3 1097.0,305.3 1100.0,306.0 1103.0,305.6 1106.0,304.5 1109.0,303.7 1112.0,302.9 1115.0,302.0 1118.0,300.0 1121.0,299.9 1124.0,298.7 1127.0,297.2 1130.0,296.4 1133.0,296.2 1136.0,295.4 1139.0,295.7 1142.0,296.1 1145.0,294.9 1148.0,296.2 1148.0,298.3 1145.0,299.3 1142.0,300.3 1139.0,301.3 1136.0,302.2 1133.0,303.2 1130.0,304.2 1127.0,305.1 1124.0,306.1 1121.0,307.1 1118.0,308.0 1115.0,309.0 1112.0,310.0 1109.0,310.9 1106.0,311.9 1103.0,312.8 1100.0,313.8 1097.0,314.7 1094.0,315.7 1091.0,316.6 1088.0,317.5 1085.0,318.5 1082.0,319.4 1079.0,320.3 1076.0,321.2 1073.0,322.1 1070.0,323.1 1067.0,324.0 1064.0,324.9 1061.0,325.8 1058.0,326.7 1055.0,327.7 1052.0,328.6 1049.0,329.5 1046.0,330.4 1043.0,331.3 1040.0,332.2 1037.0,333.1 1034.0,334.0 1031.0,334.9 1028.0,335.7 1025.0,336.6 1022.0,337.4 1019.0,338.3 1016.0,339.1 1013.0,339.9 1010.0,340.7 1007.0,341.4 1004.0,342.2 1001.0,342.9 998.0,343.6 995.0,344.2 992.0,344.8 989.0,345.4 986.0,346.0 983.0,346.5 980.0,347.0 977.0,347.5 974.0,348.0 971.0,348.4 968.0,348.8 965.0,349.2 962.0,349.6 959.0,349.9 956.0,350.3 953.0,350.6 950.0,351.0 947.0,351.3 944.0,351.7 941.0,352.1 938.0,352.5 935.0,352.8 932.0,353.2 929.0,353.6 926.0,354.0 923.0,354.3 920.0,354.7 917.0,355.0 914.0,355.4 911.0,355.7 908.0,356.0 905.0,356.3 902.0,356.6 899.0,356.9 896.0,357.2 893.0,357.5 890.0,357.7 887.0,358.0 884.0,358.2 881.0,358.4 878.0,358.6 875.0,358.9 872.0,359.1 869.0,359.3 866.0,359.5 863.0,359.7 860.0,359.9 857.0,360.1 854.0,360.2 851.0,360.4 848.0,360.6 845.0,360.8 842.0,360.9 839.0,361.1 836.0,361.2 833.0,361.4 830.0,361.5 827.0,361.6 824.0,361.8 821.0,361.9 818.0,362.0 815.0,362.1 812.0,362.2 809.0,362.3 806.0,362.4 803.0,362.4 800.0,362.5 797.0,362.6 794.0,362.6 791.0,362.7 788.0,362.7 785.0,362.8 782.0,362.9 779.0,362.9 776.0,363.0 773.0,363.0 770.0,363.1 767.0,363.1 764.0,363.1 761.0,363.1 758.0,363.1 755.0,363.1 752.0,363.1 749.0,363.0 746.0,362.9 743.0,362.8 740.0,362.7 737.0,362.6 734.0,362.5 731.0,362.3 728.0,362.1 725.0,361.9 722.0,361.7 719.0,361.4 716.0,361.1 713.0,360.9 710.0,360.6 707.0,360.2 704.0,359.9 701.0,359.6 698.0,359.2 695.0,358.8 692.0,358.5 689.0,358.1 686.0,357.7 683.0,357.3 680.0,356.9 677.0,356.5 674.0,356.0 671.0,355.6 668.0,355.2 665.0,354.7 662.0,354.3 659.0,353.9 656.0,353.4 653.0,352.9 650.0,352.5 647.0,352.0 644.0,351.5 641.0,351.1 638.0,350.6 635.0,350.1 632.0,349.6 629.0,349.1 626.0,348.6 623.0,348.0 620.0,347.5 617.0,346.9 614.0,346.3 611.0,345.6 608.0,344.8 605.0,343.7 602.0,342.3 599.0,340.8 596.0,339.7 593.0,338.8 590.0,338.1" fill="#150e0e"/>
<polygon points="590.0,334.6 593.0,335.3 596.0,336.2 599.0,337.3 602.0,338.8 605.0,340.2 608.0,341.3 611.0,342.1 614.0,342.8 617.0,343.4 620.0,344.0 623.0,344.5 626.0,345.1 629.0,345.6 632.0,346.1 635.0,346.6 638.0,347.1 641.0,347.6 644.0,348.0 647.0,348.5 650.0,349.0 653.0,349.4 656.0,349.9 659.0,350.4 662.0,350.8 665.0,351.2 668.0,351.7 671.0,352.1 674.0,352.5 677.0,353.0 680.0,353.4 683.0,353.8 686.0,354.2 689.0,354.6 692.0,355.0 695.0,355.3 698.0,355.7 701.0,356.1 704.0,356.4 707.0,356.7 710.0,357.1 713.0,357.4 716.0,357.6 719.0,357.9 722.0,358.2 725.0,358.4 728.0,358.6 731.0,358.8 734.0,359.0 737.0,359.1 740.0,359.2 743.0,359.3 746.0,359.4 749.0,359.5 752.0,359.6 755.0,359.6 758.0,359.6 761.0,359.6 764.0,359.6 767.0,359.6 770.0,359.6 773.0,359.5 776.0,359.5 779.0,359.4 779.0,362.9 776.0,363.0 773.0,363.0 770.0,363.1 767.0,363.1 764.0,363.1 761.0,363.1 758.0,363.1 755.0,363.1 752.0,363.1 749.0,363.0 746.0,362.9 743.0,362.8 740.0,362.7 737.0,362.6 734.0,362.5 731.0,362.3 728.0,362.1 725.0,361.9 722.0,361.7 719.0,361.4 716.0,361.1 713.0,360.9 710.0,360.6 707.0,360.2 704.0,359.9 701.0,359.6 698.0,359.2 695.0,358.8 692.0,358.5 689.0,358.1 686.0,357.7 683.0,357.3 680.0,356.9 677.0,356.5 674.0,356.0 671.0,355.6 668.0,355.2 665.0,354.7 662.0,354.3 659.0,353.9 656.0,353.4 653.0,352.9 650.0,352.5 647.0,352.0 644.0,351.5 641.0,351.1 638.0,350.6 635.0,350.1 632.0,349.6 629.0,349.1 626.0,348.6 623.0,348.0 620.0,347.5 617.0,346.9 614.0,346.3 611.0,345.6 608.0,344.8 605.0,343.7 602.0,342.3 599.0,340.8 596.0,339.7 593.0,338.8 590.0,338.1" fill="#3a0c0c"/>
<polygon points="700.0,357.4 703.0,357.6 706.0,357.7 709.0,357.8 712.0,358.0 715.0,358.1 718.0,358.1 721.0,358.2 724.0,358.2 727.0,358.2 730.0,358.2 733.0,358.2 736.0,358.1 739.0,358.1 742.0,358.0 745.0,357.9 748.0,357.8 751.0,357.6 754.0,357.5 757.0,357.3 760.0,357.1 763.0,357.1 766.0,357.1 769.0,357.1 772.0,357.0 775.0,357.0 778.0,357.0 781.0,356.9 784.0,356.8 787.0,356.8 790.0,356.7 793.0,356.6 796.0,356.6 799.0,356.5 802.0,356.5 805.0,356.4 808.0,356.3 811.0,356.2 814.0,356.1 817.0,356.0 820.0,355.9 823.0,355.8 826.0,355.7 829.0,355.6 832.0,355.4 835.0,355.3 838.0,355.1 841.0,355.0 844.0,354.8 847.0,354.6 850.0,354.5 853.0,354.3 856.0,354.1 859.0,353.9 862.0,353.7 865.0,353.5 868.0,353.3 871.0,353.1 874.0,352.9 877.0,352.7 880.0,352.5 883.0,352.3 886.0,352.0 889.0,351.8 892.0,351.5 895.0,351.3 898.0,351.0 901.0,350.7 904.0,350.4 907.0,350.1 910.0,349.8 913.0,349.5 916.0,349.1 919.0,348.8 922.0,348.4 925.0,348.1 928.0,347.7 931.0,347.3 934.0,347.0 937.0,346.6 940.0,346.2 943.0,345.8 946.0,345.5 949.0,345.1 952.0,344.7 955.0,344.4 958.0,344.0 961.0,343.7 964.0,343.3 967.0,342.9 970.0,342.5 973.0,342.1 976.0,341.7 979.0,341.2 982.0,340.7 985.0,340.2 988.0,339.6 991.0,339.0 994.0,338.4 997.0,337.8 1000.0,337.1 1003.0,336.4 1006.0,335.7 1009.0,334.9 1012.0,334.1 1015.0,333.3 1018.0,332.5 1021.0,331.7 1024.0,330.9 1027.0,330.0 1030.0,329.2 1033.0,328.3 1036.0,327.4 1039.0,326.5 1042.0,325.6 1045.0,324.7 1048.0,323.8 1051.0,322.9 1054.0,322.0 1057.0,321.1 1060.0,320.1 1063.0,319.2 1066.0,318.3 1069.0,317.4 1072.0,316.4 1075.0,315.5 1078.0,314.6 1081.0,313.7 1084.0,312.8 1087.0,311.8 1090.0,310.9 1093.0,310.0 1096.0,309.0 1099.0,308.1 1102.0,307.2 1105.0,306.4 1108.0,305.6 1111.0,304.8 1114.0,304.0 1117.0,303.2 1120.0,302.4 1123.0,301.6 1126.0,300.8 1129.0,299.9 1132.0,299.1 1135.0,298.3 1138.0,297.5 1141.0,296.7 1144.0,295.8 1147.0,295.0 1147.0,297.2 1144.0,298.1 1141.0,299.1 1138.0,300.1 1135.0,301.1 1132.0,302.0 1129.0,303.0 1126.0,304.0 1123.0,304.9 1120.0,305.9 1117.0,306.9 1114.0,307.8 1111.0,308.8 1108.0,309.7 1105.0,310.7 1102.0,311.6 1099.0,312.6 1096.0,313.5 1093.0,314.5 1090.0,315.4 1087.0,316.3 1084.0,317.3 1081.0,318.2 1078.0,319.1 1075.0,320.0 1072.0,320.9 1069.0,321.9 1066.0,322.8 1063.0,323.7 1060.0,324.6 1057.0,325.6 1054.0,326.5 1051.0,327.4 1048.0,328.3 1045.0,329.2 1042.0,330.1 1039.0,331.0 1036.0,331.9 1033.0,332.8 1030.0,333.7 1027.0,334.5 1024.0,335.4 1021.0,336.2 1018.0,337.0 1015.0,337.8 1012.0,338.6 1009.0,339.4 1006.0,340.2 1003.0,340.9 1000.0,341.6 997.0,342.3 994.0,342.9 991.0,343.5 988.0,344.1 985.0,344.7 982.0,345.2 979.0,345.7 976.0,346.2 973.0,346.6 970.0,347.0 967.0,347.4 964.0,347.8 961.0,348.2 958.0,348.5 955.0,348.9 952.0,349.2 949.0,349.6 946.0,350.0 943.0,350.3 940.0,350.7 937.0,351.1 934.0,351.5 931.0,351.8 928.0,352.2 925.0,352.6 922.0,352.9 919.0,353.3 916.0,353.6 913.0,354.0 910.0,354.3 907.0,354.6 904.0,354.9 901.0,355.2 898.0,355.5 895.0,355.8 892.0,356.0 889.0,356.3 886.0,356.5 883.0,356.8 880.0,357.0 877.0,357.2 874.0,357.4 871.0,357.6 868.0,357.8 865.0,358.0 862.0,358.2 859.0,358.4 856.0,358.6 853.0,358.8 850.0,359.0 847.0,359.1 844.0,359.3 841.0,359.5 838.0,359.6 835.0,359.8 832.0,359.9 829.0,360.1 826.0,360.2 823.0,360.3 820.0,360.4 817.0,360.5 814.0,360.6 811.0,360.7 808.0,360.8 805.0,360.9 802.0,361.0 799.0,361.0 796.0,361.1 793.0,361.1 790.0,361.2 787.0,361.3 784.0,361.3 781.0,361.4 778.0,361.5 775.0,361.5 772.0,361.5 769.0,361.6 766.0,361.6 763.0,361.6 760.0,361.6 757.0,361.6 754.0,361.6 751.0,361.5 748.0,361.5 745.0,361.4 742.0,361.3 739.0,361.2 736.0,361.0 733.0,360.9 730.0,360.7 727.0,360.5 724.0,360.3 721.0,360.1 718.0,359.8 715.0,359.6 712.0,359.3 709.0,358.9 706.0,358.6 703.0,358.3 700.0,357.9" fill="#d2c2c2"/>
<path d="M726,357 Q738,349 756,349 Q770,350 778,356 Z" fill="#a8a8a8"/><path d="M734,354 L744,352 M750,351 L762,352" stroke="#d0d0d0" stroke-width="1"/>
<path d="M1128,302 Q1136,296 1144,297 L1147,301 Z" fill="#8a8a8a"/>
<rect x="1133" y="301" width="2" height="1" fill="#b0b0b0"/><rect x="651" y="343" width="2" height="1" fill="#c8c8c8"/><rect x="935" y="345" width="1" height="1" fill="#5a5a5a"/><rect x="782" y="355" width="1" height="1" fill="#5a5a5a"/><rect x="1004" y="331" width="2" height="1" fill="#5a5a5a"/><rect x="776" y="356" width="3" height="1" fill="#c8c8c8"/><rect x="1000" y="329" width="2" height="1" fill="#b0b0b0"/><rect x="610" y="338" width="3" height="2" fill="#b0b0b0"/><rect x="928" y="344" width="3" height="2" fill="#6a6a6a"/><rect x="680" y="349" width="1" height="1" fill="#5a5a5a"/><rect x="949" y="341" width="2" height="1" fill="#b0b0b0"/><rect x="1045" y="320" width="2" height="1" fill="#6a6a6a"/><rect x="868" y="351" width="2" height="1" fill="#9aa0a8"/><rect x="823" y="351" width="2" height="1" fill="#5a5a5a"/><rect x="913" y="347" width="3" height="2" fill="#b0b0b0"/><rect x="885" y="348" width="1" height="1" fill="#b0b0b0"/><rect x="927" y="345" width="2" height="1" fill="#b0b0b0"/><rect x="853" y="352" width="4" height="1" fill="#6a6a6a"/><rect x="967" y="339" width="3" height="1" fill="#9aa0a8"/><rect x="626" y="338" width="1" height="1" fill="#9aa0a8"/><rect x="841" y="350" width="1" height="1" fill="#6a6a6a"/><rect x="929" y="344" width="4" height="1" fill="#5a5a5a"/><rect x="746" y="355" width="3" height="2" fill="#b0b0b0"/><rect x="976" y="338" width="2" height="2" fill="#b0b0b0"/><rect x="1053" y="318" width="1" height="1" fill="#c8c8c8"/><rect x="767" y="356" width="3" height="1" fill="#b0b0b0"/><rect x="960" y="341" width="2" height="2" fill="#5a5a5a"/><rect x="955" y="339" width="2" height="1" fill="#b0b0b0"/><rect x="1002" y="329" width="3" height="1" fill="#5a5a5a"/><rect x="1049" y="319" width="3" height="2" fill="#c8c8c8"/><rect x="780" y="354" width="2" height="1" fill="#5a5a5a"/><rect x="794" y="354" width="3" height="1" fill="#5a5a5a"/><rect x="605" y="335" width="4" height="1" fill="#9aa0a8"/><rect x="1119" y="301" width="2" height="1" fill="#8a8a8a"/><rect x="740" y="353" width="2" height="1" fill="#b0b0b0"/><rect x="1042" y="324" width="2" height="1" fill="#b0b0b0"/><rect x="887" y="348" width="3" height="2" fill="#6a6a6a"/><rect x="644" y="340" width="2" height="1" fill="#8a8a8a"/><rect x="742" y="353" width="1" height="1" fill="#8a8a8a"/><rect x="926" y="343" width="2" height="1" fill="#c8c8c8"/><rect x="601" y="337" width="3" height="1" fill="#9aa0a8"/><rect x="665" y="346" width="2" height="1" fill="#b0b0b0"/><rect x="738" y="354" width="2" height="2" fill="#6a6a6a"/><rect x="884" y="347" width="3" height="2" fill="#5a5a5a"/><rect x="692" y="350" width="1" height="1" fill="#8a8a8a"/><rect x="603" y="337" width="4" height="1" fill="#9aa0a8"/><rect x="854" y="353" width="1" height="2" fill="#5a5a5a"/><rect x="831" y="353" width="3" height="2" fill="#6a6a6a"/><rect x="970" y="340" width="2" height="1" fill="#5a5a5a"/><rect x="992" y="332" width="2" height="1" fill="#b0b0b0"/><rect x="603" y="336" width="2" height="1" fill="#b0b0b0"/><rect x="625" y="340" width="3" height="2" fill="#5a5a5a"/><rect x="1124" y="302" width="2" height="1" fill="#c8c8c8"/><rect x="696" y="350" width="1" height="1" fill="#6a6a6a"/><rect x="1119" y="305" width="4" height="1" fill="#b0b0b0"/><rect x="614" y="339" width="2" height="1" fill="#b0b0b0"/><rect x="596" y="335" width="3" height="1" fill="#9aa0a8"/><rect x="953" y="339" width="1" height="1" fill="#6a6a6a"/><rect x="1040" y="321" width="4" height="1" fill="#c8c8c8"/><rect x="607" y="336" width="2" height="1" fill="#9aa0a8"/><rect x="1117" y="305" width="2" height="2" fill="#5a5a5a"/><rect x="1022" y="327" width="2" height="2" fill="#c8c8c8"/><rect x="676" y="349" width="2" height="1" fill="#5a5a5a"/><rect x="1081" y="313" width="4" height="1" fill="#9aa0a8"/><rect x="1005" y="331" width="1" height="2" fill="#9aa0a8"/><rect x="1030" y="326" width="2" height="1" fill="#8a8a8a"/><rect x="618" y="338" width="1" height="1" fill="#c8c8c8"/><rect x="899" y="348" width="4" height="2" fill="#b0b0b0"/><rect x="862" y="348" width="1" height="2" fill="#9aa0a8"/><rect x="1084" y="310" width="4" height="1" fill="#5a5a5a"/><rect x="997" y="331" width="1" height="1" fill="#b0b0b0"/><rect x="992" y="332" width="3" height="1" fill="#c8c8c8"/><rect x="637" y="343" width="2" height="1" fill="#9aa0a8"/><rect x="940" y="341" width="4" height="1" fill="#6a6a6a"/><rect x="733" y="356" width="2" height="2" fill="#9aa0a8"/><rect x="668" y="347" width="3" height="1" fill="#5a5a5a"/><rect x="649" y="342" width="3" height="1" fill="#5a5a5a"/><rect x="877" y="349" width="3" height="1" fill="#9aa0a8"/><rect x="704" y="354" width="3" height="1" fill="#6a6a6a"/><rect x="845" y="353" width="3" height="1" fill="#c8c8c8"/><rect x="709" y="355" width="2" height="1" fill="#9aa0a8"/><rect x="644" y="344" width="2" height="1" fill="#b0b0b0"/><rect x="924" y="345" width="2" height="1" fill="#5a5a5a"/><rect x="794" y="354" width="3" height="1" fill="#8a8a8a"/><rect x="682" y="351" width="3" height="1" fill="#6a6a6a"/><rect x="991" y="333" width="3" height="1" fill="#8a8a8a"/><rect x="1053" y="317" width="2" height="1" fill="#8a8a8a"/><rect x="1107" y="305" width="1" height="2" fill="#6a6a6a"/><rect x="733" y="353" width="3" height="2" fill="#8a8a8a"/><rect x="792" y="354" width="2" height="1" fill="#6a6a6a"/><rect x="650" y="345" width="2" height="2" fill="#b0b0b0"/><rect x="731" y="354" width="4" height="1" fill="#b0b0b0"/><rect x="1016" y="329" width="3" height="1" fill="#5a5a5a"/><rect x="813" y="355" width="4" height="2" fill="#b0b0b0"/><rect x="987" y="332" width="3" height="1" fill="#9aa0a8"/><rect x="1005" y="331" width="2" height="1" fill="#8a8a8a"/><rect x="1092" y="310" width="2" height="1" fill="#c8c8c8"/><rect x="782" y="354" width="2" height="1" fill="#5a5a5a"/><rect x="725" y="355" width="3" height="1" fill="#b0b0b0"/><rect x="946" y="339" width="4" height="1" fill="#9aa0a8"/><rect x="715" y="355" width="3" height="1" fill="#b0b0b0"/><rect x="894" y="346" width="2" height="1" fill="#9aa0a8"/><rect x="645" y="341" width="2" height="2" fill="#b0b0b0"/><rect x="1079" y="314" width="3" height="1" fill="#c8c8c8"/><rect x="1001" y="330" width="2" height="1" fill="#8a8a8a"/><rect x="866" y="350" width="2" height="1" fill="#5a5a5a"/><rect x="869" y="350" width="2" height="1" fill="#6a6a6a"/><rect x="1084" y="311" width="3" height="1" fill="#6a6a6a"/><rect x="1058" y="320" width="1" height="1" fill="#8a8a8a"/><rect x="827" y="354" width="3" height="2" fill="#c8c8c8"/><rect x="595" y="335" width="4" height="1" fill="#c8c8c8"/><rect x="730" y="353" width="2" height="1" fill="#9aa0a8"/><rect x="1125" y="300" width="3" height="1" fill="#9aa0a8"/><rect x="1018" y="325" width="2" height="1" fill="#9aa0a8"/><rect x="1096" y="310" width="2" height="1" fill="#5a5a5a"/><rect x="732" y="356" width="1" height="1" fill="#8a8a8a"/><rect x="759" y="357" width="2" height="1" fill="#6a6a6a"/><rect x="717" y="354" width="1" height="2" fill="#6a6a6a"/><rect x="1138" y="297" width="2" height="2" fill="#b0b0b0"/><rect x="854" y="350" width="2" height="1" fill="#c8c8c8"/><ellipse cx="905" cy="346.2" rx="7.8" ry="2" fill="#8a8e92" opacity="0.8"/><ellipse cx="935" cy="342.5" rx="6.2" ry="2" fill="#8a8e92" opacity="0.8"/><ellipse cx="962" cy="339.0" rx="5.1" ry="2" fill="#8a8e92" opacity="0.8"/><ellipse cx="990" cy="333.6" rx="7.0" ry="2" fill="#8a8e92" opacity="0.8"/><ellipse cx="1015" cy="328.2" rx="7.7" ry="2" fill="#8a8e92" opacity="0.8"/>
<polygon points="537,318 555,316.5 572,317.5 583,320 592,327 598,332 608,335.5 618,337 620,347 600,344 591,341 578,334 562,328 548,327 537,326" fill="#151010"/>
<rect x="538" y="310" width="3" height="8" fill="#9aa0a4"/>
<path d="M556,317.5 L572,318 M584,322 L592,329 M598,333 L606,336" stroke="#8e9296" stroke-width="1.6" fill="none"/>
<path d="M560,323 L570,325 M545,322 L552,323 M575,330 L583,334" stroke="#5a5a5a" stroke-width="1" fill="none"/>
<path d="M538,320 L554,319.5 L562,321.5 L572,324.5 L580,329 L586,333 L590,336 L591,340 L590,344" stroke="#e6e6e6" stroke-width="1.1" fill="none"/>
<path d="M528.0,328.5 L531.0,329.0 L534.0,329.5 L537.0,330.0 L540.0,330.6 L543.0,331.1 L546.0,331.6 L549.0,332.1 L552.0,332.6 L555.0,333.1 L558.0,333.6 L561.0,334.1 L564.0,334.7 L567.0,335.2 L570.0,335.7 L573.0,336.3 L576.0,336.8 L579.0,337.4 L582.0,338.0 L585.0,338.5 L588.0,339.2 L591.0,339.8 L594.0,340.6 L597.0,341.5 L600.0,342.8 L603.0,344.3 L606.0,345.6 L609.0,346.6 L612.0,347.4 L615.0,348.0 L618.0,348.6 L621.0,349.2 L624.0,349.7 L627.0,350.2 L630.0,350.7 L633.0,351.2 L636.0,351.7 L639.0,352.2 L642.0,352.7 L645.0,353.2 L648.0,353.7 L651.0,354.1 L654.0,354.6 L657.0,355.1 L660.0,355.5 L663.0,356.0 L666.0,356.4 L669.0,356.8 L672.0,357.3 L675.0,357.7 L678.0,358.1 L681.0,358.5 L684.0,358.9 L687.0,359.3 L690.0,359.7 L693.0,360.1 L696.0,360.5 L699.0,360.8 L702.0,361.2 L705.0,361.5 L708.0,361.8 L711.0,362.2 L714.0,362.5 L717.0,362.7 L720.0,363.0 L723.0,363.2 L726.0,363.5 L729.0,363.7 L732.0,363.8 L735.0,364.0 L738.0,364.1 L741.0,364.3 L744.0,364.4 L747.0,364.5 L750.0,364.5 L753.0,364.6 L756.0,364.6 L759.0,364.6 L762.0,364.6 L765.0,364.6 L768.0,364.6 L771.0,364.6 L774.0,364.5 L777.0,364.5 L780.0,364.4 L783.0,364.4 L786.0,364.3 L789.0,364.2 L792.0,364.2 L795.0,364.1 L798.0,364.0 L801.0,364.0 L804.0,363.9 L807.0,363.8 L810.0,363.8 L813.0,363.7 L816.0,363.6 L819.0,363.5 L822.0,363.3 L825.0,363.2 L828.0,363.1 L831.0,363.0 L834.0,362.8 L837.0,362.7 L840.0,362.5 L843.0,362.4 L846.0,362.2 L849.0,362.0 L852.0,361.9 L855.0,361.7 L858.0,361.5 L861.0,361.3 L864.0,361.1 L867.0,360.9 L870.0,360.7 L873.0,360.5 L876.0,360.3 L879.0,360.1 L882.0,359.9 L885.0,359.6 L888.0,359.4 L891.0,359.1 L894.0,358.9 L897.0,358.6 L900.0,358.3 L903.0,358.0 L906.0,357.7 L909.0,357.4 L912.0,357.1 L915.0,356.8 L918.0,356.4 L921.0,356.1 L924.0,355.7 L927.0,355.3 L930.0,355.0 L933.0,354.6 L936.0,354.2 L939.0,353.8 L942.0,353.4 L945.0,353.1 L948.0,352.7 L951.0,352.4 L954.0,352.0 L957.0,351.7 L960.0,351.3 L963.0,350.9 L966.0,350.6 L969.0,350.2 L972.0,349.8 L975.0,349.3 L978.0,348.9 L981.0,348.4 L984.0,347.9 L987.0,347.3 L990.0,346.7 L993.0,346.1 L996.0,345.5 L999.0,344.8 L1002.0,344.1 L1005.0,343.4 L1008.0,342.7 L1011.0,341.9 L1014.0,341.1 L1017.0,340.3 L1020.0,339.5 L1023.0,338.6 L1026.0,337.8 L1029.0,336.9 L1032.0,336.1 L1035.0,335.2 L1038.0,334.3 L1041.0,333.4 L1044.0,332.5 L1047.0,331.6 L1050.0,330.7 L1053.0,329.8 L1056.0,328.9 L1059.0,327.9 L1062.0,327.0 L1065.0,326.1 L1068.0,325.2 L1071.0,324.3 L1074.0,323.3 L1077.0,322.4 L1080.0,321.5 L1083.0,320.6 L1086.0,319.7 L1089.0,318.7 L1092.0,317.8 L1095.0,316.9 L1098.0,315.9 L1101.0,315.0 L1104.0,314.0 L1107.0,313.1 L1110.0,312.1 L1113.0,311.1 L1116.0,310.2 L1119.0,309.2 L1122.0,308.3 L1125.0,307.3 L1128.0,306.3 L1131.0,305.4 L1134.0,304.4 L1137.0,303.4 L1140.0,302.4 L1143.0,301.5 L1146.0,300.5 L1149.0,299.5 L1152.0,298.5 L1155.0,297.6 L1158.0,296.6 L1161.0,295.6" stroke="#d31d1d" stroke-width="3" fill="none"/>
<path d="M600.0,343.7 L603.0,345.2 L606.0,346.5 L609.0,347.5 L612.0,348.3 L615.0,348.9 L618.0,349.5 L621.0,350.1 L624.0,350.6 L627.0,351.1 L630.0,351.6 L633.0,352.1 L636.0,352.6 L639.0,353.1 L642.0,353.6 L645.0,354.1 L648.0,354.6 L651.0,355.0 L654.0,355.5 L657.0,356.0 L660.0,356.4 L663.0,356.9 L666.0,357.3 L669.0,357.7 L672.0,358.2 L675.0,358.6 L678.0,359.0 L681.0,359.4 L684.0,359.8 L687.0,360.2 L690.0,360.6 L693.0,361.0 L696.0,361.4 L699.0,361.7 L702.0,362.1 L705.0,362.4 L708.0,362.7 L711.0,363.1 L714.0,363.4 L717.0,363.6 L720.0,363.9 L723.0,364.1 L726.0,364.4 L729.0,364.6 L732.0,364.7 L735.0,364.9 L738.0,365.0 L741.0,365.2 L744.0,365.3 L747.0,365.4 L750.0,365.4 L753.0,365.5 L756.0,365.5 L759.0,365.5 L762.0,365.5 L765.0,365.5 L768.0,365.5 L771.0,365.5 L774.0,365.4 L777.0,365.4 L780.0,365.3 L783.0,365.3 L786.0,365.2 L789.0,365.1 L792.0,365.1 L795.0,365.0 L798.0,364.9 L801.0,364.9 L804.0,364.8 L807.0,364.7 L810.0,364.7 L813.0,364.6 L816.0,364.5 L819.0,364.4 L822.0,364.2 L825.0,364.1 L828.0,364.0 L831.0,363.9 L834.0,363.7 L837.0,363.6 L840.0,363.4 L843.0,363.3 L846.0,363.1 L849.0,362.9 L852.0,362.8 L855.0,362.6 L858.0,362.4 L861.0,362.2 L864.0,362.0 L867.0,361.8 L870.0,361.6 L873.0,361.4 L876.0,361.2 L879.0,361.0 L882.0,360.8 L885.0,360.5 L888.0,360.3 L891.0,360.0 L894.0,359.8 L897.0,359.5 L900.0,359.2 L903.0,358.9 L906.0,358.6 L909.0,358.3 L912.0,358.0 L915.0,357.7 L918.0,357.3 L921.0,357.0 L924.0,356.6 L927.0,356.2 L930.0,355.9 L933.0,355.5 L936.0,355.1 L939.0,354.7 L942.0,354.3 L945.0,354.0 L948.0,353.6 L951.0,353.3 L954.0,352.9 L957.0,352.6 L960.0,352.2 L963.0,351.8 L966.0,351.5 L969.0,351.1 L972.0,350.7 L975.0,350.2 L978.0,349.8 L981.0,349.3 L984.0,348.8 L987.0,348.2 L990.0,347.6 L993.0,347.0 L996.0,346.4 L999.0,345.7 L1002.0,345.0 L1005.0,344.3 L1008.0,343.6 L1011.0,342.8 L1014.0,342.0 L1017.0,341.2 L1020.0,340.4 L1023.0,339.5 L1026.0,338.7 L1029.0,337.8 L1032.0,337.0 L1035.0,336.1 L1038.0,335.2 L1041.0,334.3 L1044.0,333.4 L1047.0,332.5 L1050.0,331.6 L1053.0,330.7 L1056.0,329.8 L1059.0,328.8 L1062.0,327.9 L1065.0,327.0 L1068.0,326.1 L1071.0,325.2 L1074.0,324.2 L1077.0,323.3 L1080.0,322.4 L1083.0,321.5 L1086.0,320.6 L1089.0,319.6 L1092.0,318.7 L1095.0,317.8 L1098.0,316.8 L1101.0,315.9 L1104.0,314.9 L1107.0,314.0 L1110.0,313.0 L1113.0,312.0 L1116.0,311.1 L1119.0,310.1 L1122.0,309.2 L1125.0,308.2 L1128.0,307.2 L1131.0,306.3 L1134.0,305.3 L1137.0,304.3 L1140.0,303.3 L1143.0,302.4 L1146.0,301.4 L1149.0,300.4 L1152.0,299.4 L1155.0,298.5" stroke="#d01a1a" stroke-width="3.4" fill="none"/>
<path d="M620.0,352.1 L623.0,352.6 L626.0,353.2 L629.0,353.7 L632.0,354.2 L635.0,354.7 L638.0,355.2 L641.0,355.7 L644.0,356.1 L647.0,356.6 L650.0,357.1 L653.0,357.5 L656.0,358.0 L659.0,358.5 L662.0,358.9 L665.0,359.3 L668.0,359.8 L671.0,360.2 L674.0,360.6 L677.0,361.1 L680.0,361.5 L683.0,361.9 L686.0,362.3 L689.0,362.7 L692.0,363.1 L695.0,363.4 L698.0,363.8 L701.0,364.2 L704.0,364.5 L707.0,364.8 L710.0,365.2 L713.0,365.5 L716.0,365.7 L719.0,366.0 L722.0,366.3 L725.0,366.5 L728.0,366.7 L731.0,366.9 L734.0,367.1 L737.0,367.2 L740.0,367.3 L743.0,367.4 L746.0,367.5 L749.0,367.6 L752.0,367.7 L755.0,367.7 L758.0,367.7 L761.0,367.7 L764.0,367.7 L767.0,367.7 L770.0,367.7 L773.0,367.6 L776.0,367.6 L779.0,367.5 L782.0,367.5 L785.0,367.4 L788.0,367.3 L791.0,367.3 L794.0,367.2 L797.0,367.2 L800.0,367.1 L803.0,367.0 L806.0,367.0 L809.0,366.9 L812.0,366.8 L815.0,366.7 L818.0,366.6 L821.0,366.5 L824.0,366.4 L827.0,366.2 L830.0,366.1 L833.0,366.0 L836.0,365.8 L839.0,365.7 L842.0,365.5 L845.0,365.4 L848.0,365.2 L851.0,365.0 L854.0,364.8 L857.0,364.7 L860.0,364.5 L863.0,364.3 L866.0,364.1 L869.0,363.9 L872.0,363.7 L875.0,363.5 L878.0,363.2 L881.0,363.0 L884.0,362.8 L887.0,362.6 L890.0,362.3 L893.0,362.1 L896.0,361.8 L899.0,361.5 L902.0,361.2 L905.0,360.9 L908.0,360.6 L911.0,360.3 L914.0,360.0 L917.0,359.6 L920.0,359.3 L923.0,358.9 L926.0,358.6 L929.0,358.2 L932.0,357.8 L935.0,357.4 L938.0,357.1 L941.0,356.7 L944.0,356.3 L947.0,355.9 L950.0,355.6 L953.0,355.2 L956.0,354.9 L959.0,354.5 L962.0,354.2 L965.0,353.8 L968.0,353.4 L971.0,353.0 L974.0,352.6 L977.0,352.1 L980.0,351.6 L983.0,351.1 L986.0,350.6 L989.0,350.0 L992.0,349.4 L995.0,348.8 L998.0,348.2 L1001.0,347.5 L1004.0,346.8 L1007.0,346.0 L1010.0,345.3 L1013.0,344.5 L1016.0,343.7 L1019.0,342.9 L1022.0,342.0 L1025.0,341.2 L1028.0,340.3 L1031.0,339.5 L1034.0,338.6 L1037.0,337.7 L1040.0,336.8 L1043.0,335.9 L1046.0,335.0 L1049.0,334.1 L1052.0,333.2 L1055.0,332.3 L1058.0,331.3 L1061.0,330.4 L1064.0,329.5 L1067.0,328.6 L1070.0,327.7 L1073.0,326.7 L1076.0,325.8 L1079.0,324.9 L1082.0,324.0 L1085.0,323.1 L1088.0,322.1 L1091.0,321.2 L1094.0,320.3 L1097.0,319.3 L1100.0,318.4 L1103.0,317.4 L1106.0,316.5 L1109.0,315.5 L1112.0,314.6 L1115.0,313.6 L1118.0,312.6 L1121.0,311.7 L1124.0,310.7 L1127.0,309.7 L1130.0,308.8 L1133.0,307.8 L1136.0,306.8 L1139.0,305.9 L1142.0,304.9 L1145.0,303.9 L1148.0,302.9" stroke="#3e0808" stroke-width="1" fill="none"/>
<path d="M590.0,343.7 L593.0,344.4 L596.0,345.3 L599.0,346.4 L602.0,347.9 L605.0,349.3 L608.0,350.4 L611.0,351.2 L614.0,351.9 L617.0,352.5 L620.0,353.1 L623.0,353.6 L626.0,354.2 L629.0,354.7 L632.0,355.2 L635.0,355.7 L638.0,356.2 L641.0,356.7 L644.0,357.1 L647.0,357.6 L650.0,358.1 L653.0,358.5 L656.0,359.0 L659.0,359.5 L662.0,359.9 L665.0,360.3 L668.0,360.8 L671.0,361.2 L674.0,361.6 L677.0,362.1 L680.0,362.5 L683.0,362.9 L686.0,363.3 L689.0,363.7 L692.0,364.1 L695.0,364.4 L698.0,364.8 L701.0,365.2 L704.0,365.5 L707.0,365.8 L710.0,366.2 L713.0,366.5 L716.0,366.7 L719.0,367.0 L722.0,367.3 L725.0,367.5 L728.0,367.7 L731.0,367.9 L734.0,368.1 L737.0,368.2 L740.0,368.3 L743.0,368.4 L746.0,368.5 L749.0,368.6 L752.0,368.7 L755.0,368.7 L758.0,368.7 L761.0,368.7 L764.0,368.7 L767.0,368.7 L770.0,368.7 L773.0,368.6 L776.0,368.6 L779.0,368.5 L782.0,368.5 L785.0,368.4 L788.0,368.3 L791.0,368.3 L794.0,368.2 L797.0,368.2 L800.0,368.1 L803.0,368.0 L806.0,368.0 L809.0,367.9 L812.0,367.8 L815.0,367.7 L818.0,367.6 L821.0,367.5 L824.0,367.4 L827.0,367.2 L830.0,367.1 L833.0,367.0 L836.0,366.8 L839.0,366.7 L842.0,366.5 L845.0,366.4 L848.0,366.2 L851.0,366.0 L854.0,365.8 L857.0,365.7 L860.0,365.5 L863.0,365.3 L866.0,365.1 L869.0,364.9 L872.0,364.7 L875.0,364.5 L878.0,364.2 L881.0,364.0 L884.0,363.8 L887.0,363.6 L890.0,363.3 L893.0,363.1 L896.0,362.8 L899.0,362.5 L902.0,362.2 L905.0,361.9 L908.0,361.6 L911.0,361.3 L914.0,361.0 L917.0,360.6 L920.0,360.3 L923.0,359.9 L926.0,359.6 L929.0,359.2 L932.0,358.8 L935.0,358.4 L938.0,358.1 L941.0,357.7 L944.0,357.3 L947.0,356.9 L950.0,356.6 L953.0,356.2 L956.0,355.9 L959.0,355.5 L962.0,355.2 L965.0,354.8 L968.0,354.4 L971.0,354.0 L974.0,353.6 L977.0,353.1 L980.0,352.6 L983.0,352.1 L986.0,351.6 L989.0,351.0 L992.0,350.4 L995.0,349.8 L998.0,349.2 L1001.0,348.5 L1004.0,347.8 L1007.0,347.0 L1010.0,346.3 L1013.0,345.5 L1016.0,344.7 L1019.0,343.9 L1022.0,343.0 L1025.0,342.2 L1028.0,341.3 L1031.0,340.5 L1034.0,339.6 L1037.0,338.7 L1040.0,337.8 L1043.0,336.9 L1046.0,336.0 L1049.0,335.1 L1052.0,334.2 L1055.0,333.3 L1058.0,332.3 L1061.0,331.4 L1064.0,330.5 L1067.0,329.6 L1070.0,328.7 L1073.0,327.7 L1076.0,326.8 L1079.0,325.9 L1082.0,325.0 L1085.0,324.1 L1088.0,323.1 L1091.0,322.2 L1094.0,321.3 L1097.0,320.3 L1100.0,319.4 L1103.0,318.4 L1106.0,317.5 L1109.0,316.5 L1112.0,315.6 L1115.0,314.6 L1118.0,313.6 L1121.0,312.7 L1124.0,311.7 L1127.0,310.7 L1130.0,309.8 L1133.0,308.8 L1136.0,307.8 L1139.0,306.9 L1142.0,305.9 L1145.0,304.9 L1148.0,303.9 L1151.0,303.0 L1154.0,302.0 L1157.0,301.0 L1160.0,300.1 L1163.0,299.1" stroke="#ececec" stroke-width="1.1" fill="none"/>
<path d="M1021.5,551.5 H1242.5 M1021.5,548 V555 M1242.5,548 V555" stroke="#fff" stroke-width="1.3" fill="none"/>
<text x="1120" y="569" font-family="Liberation Sans" font-size="12" fill="#fff" letter-spacing="-0.2">0.55</text>
<rect x="1277" y="525" width="2" height="27" fill="#3cc83c"/><rect x="1277" y="550" width="27" height="2" fill="#e01818"/>
</svg>
<div class="a" style="left:390px;top:85px;width:923px;height:23px;background:#9ec23b"></div>
<div class="t" style="left:400px;top:91px;color:#000;letter-spacing:-0.1px">[GL filter] EyeDome Lighting (disable normals and increase points size for a better result!)</div>
<svg class="a" style="left:979px;top:90px" width="331" height="27" viewBox="979 90 331 27">
<defs><linearGradient id="gbtn" x1="0" y1="0" x2="0" y2="1"><stop offset="0" stop-color="#fbfbfb"/><stop offset=".45" stop-color="#ececec"/><stop offset=".5" stop-color="#dcdcdc"/><stop offset="1" stop-color="#d0d0d0"/></linearGradient>
<linearGradient id="gyel" x1="0" y1="0" x2="0" y2="1"><stop offset="0" stop-color="#f4cc40"/><stop offset="1" stop-color="#d49a18"/></linearGradient>
<linearGradient id="gblue" x1="0" y1="0" x2="0" y2="1"><stop offset="0" stop-color="#8ab0e0"/><stop offset="1" stop-color="#4a78c0"/></linearGradient></defs>
<rect x="979" y="90" width="330" height="26" fill="#f0f0f0"/><rect x="979.5" y="90.5" width="329" height="25" fill="none" stroke="#f8fbfc" stroke-width="1"/>
<rect x="982.5" y="93.5" width="20" height="19" rx="3" fill="url(#gbtn)" stroke="#707070" stroke-width="1.1"/><rect x="1011.5" y="93.5" width="20" height="19" rx="3" fill="url(#gbtn)" stroke="#707070" stroke-width="1.1"/><rect x="1040.5" y="93.5" width="20" height="19" rx="3" fill="url(#gbtn)" stroke="#707070" stroke-width="1.1"/><rect x="1069.5" y="93.5" width="20" height="19" rx="3" fill="url(#gbtn)" stroke="#707070" stroke-width="1.1"/><rect x="1098.5" y="93.5" width="20" height="19" rx="3" fill="url(#gbtn)" stroke="#707070" stroke-width="1.1"/><rect x="1127.5" y="93.5" width="20" height="19" rx="3" fill="url(#gbtn)" stroke="#707070" stroke-width="1.1"/><rect x="1156.5" y="93.5" width="20" height="19" rx="3" fill="url(#gbtn)" stroke="#707070" stroke-width="1.1"/><rect x="1185.5" y="93.5" width="20" height="19" rx="3" fill="url(#gbtn)" stroke="#707070" stroke-width="1.1"/><rect x="1214.5" y="93.5" width="20" height="19" rx="3" fill="url(#gbtn)" stroke="#707070" stroke-width="1.1"/>
<path d="M992 97 L987 102 L998 107 M992 97 L990 110 L995 103" stroke="#555" stroke-width="1.2" fill="none"/><circle cx="992" cy="97" r="1.8" fill="#7a6ee0"/><circle cx="987" cy="102" r="1.8" fill="#7a6ee0"/><circle cx="998" cy="107" r="1.8" fill="#7a6ee0"/><circle cx="990" cy="110" r="1.8" fill="#7a6ee0"/><circle cx="996" cy="103" r="1.8" fill="#7a6ee0"/>
<path d="M1015 99 L1017 96 L1022 97 L1028 100 L1028 110 L1017 106 Z" fill="url(#gyel)" stroke="#b88a10" stroke-width=".6"/><path d="M1015 101 L1027 103 L1028 110 L1016 106 Z" fill="#f0c030"/>
<path d="M1043 110 L1057 96" stroke="#c02040" stroke-width="1.2"/><path d="M1042 107 L1046 111 M1046 107 L1042 111" stroke="#c02040" stroke-width="1"/><path d="M1045 104 L1049 108 M1049 104 L1045 108" stroke="#c02040" stroke-width="1"/><path d="M1048 101 L1052 105 M1052 101 L1048 105" stroke="#c02040" stroke-width="1"/><path d="M1051 98 L1055 102 M1055 98 L1051 102" stroke="#c02040" stroke-width="1"/><path d="M1054 95 L1058 99 M1058 95 L1054 99" stroke="#c02040" stroke-width="1"/>
<path d="M1072 98 Q1073 103 1079 107 Q1085 103 1086 98" stroke="#6a7080" stroke-width=".9" fill="none"/><rect x="1072.0" y="97" width="1.5" height="1.5" fill="#222"/><rect x="1074.8" y="97" width="1.5" height="1.5" fill="#222"/><rect x="1077.6" y="97" width="1.5" height="1.5" fill="#222"/><rect x="1080.4" y="97" width="1.5" height="1.5" fill="#222"/><rect x="1083.2" y="97" width="1.5" height="1.5" fill="#222"/><rect x="1086.0" y="97" width="1.5" height="1.5" fill="#222"/>
<path d="M1101 98 L1105 97 L1109 98 L1115 97 L1115 108 L1109 109 L1105 108 L1101 109 Z M1105 97 V108 M1109 98 V109" stroke="#777" stroke-width=".9" fill="#ececec"/>
<rect x="1130" y="96" width="15" height="15" fill="url(#gblue)" stroke="#3a5a90" stroke-width=".8"/><rect x="1132" y="97" width="11" height="6" fill="#d8e4f4"/><rect x="1133" y="106" width="8" height="5" fill="#c8d4e8"/><rect x="1134" y="107" width="2" height="3" fill="#445"/>
<path d="M1163 98 A5 5 0 1 1 1162 106" stroke="#333" stroke-width="1.6" fill="none"/><path d="M1160 96 L1165 97 L1162 101 Z" fill="#333"/><circle cx="1166.5" cy="103" r="1.8" fill="none" stroke="#333" stroke-width="1"/>
<path d="M1192 99 L1199 107 M1199 99 L1192 107" stroke="#b02840" stroke-width="2.2" stroke-linecap="round"/>
<path d="M1218 103 L1223 108 L1231 97" stroke="#1e9a1e" stroke-width="3" fill="none" stroke-linejoin="round"/>
<text x="1242" y="108" font-family="Liberation Sans" font-size="11.5" fill="#000">Vert.</text>
<rect x="1273.5" y="93.5" width="32" height="19" rx="3" fill="url(#gbtn)" stroke="#707070" stroke-width="1.1"/><text x="1277" y="108" font-family="Liberation Sans" font-size="12" fill="#000">Z</text><path d="M1293 100 H1300 L1296.5 104 Z" fill="#000"/>
</svg>

<!-- Console dock -->
<div class="a" style="left:44px;top:586px;width:1269px;height:19px;background:#dcdcdc;border-top:1px solid #bcbcbc;border-bottom:1px solid #bebebe"></div>
<div class="t" style="left:48px;top:592px;color:#000;letter-spacing:-0.1px">Console</div><svg class="a" style="left:1284px;top:591px" width="10" height="10" viewBox="0 0 10 10"><path d="M3.5,3 V0.5 H8.5 V5.5 H6" stroke="#2a2a2a" stroke-width="1" fill="none"/><rect x="3.5" y="0.5" width="5" height="1.5" fill="#2a2a2a"/><rect x="0.5" y="3.5" width="5" height="5.5" fill="none" stroke="#2a2a2a" stroke-width="1"/><rect x="0.5" y="3.5" width="5" height="1.6" fill="#2a2a2a"/></svg><svg class="a" style="left:1298px;top:591px" width="11" height="11" viewBox="0 0 11 11"><path d="M1,1 L9.5,9.5 M9.5,1 L1,9.5" stroke="#111" stroke-width="1.6"/></svg>
<div class="a" style="left:53px;top:616px;width:1251px;height:88px;border:1px solid #8a8a8a;background:#fff"></div>
<div class="a" style="left:54px;top:635px;width:1232px;height:17px;background:#f5f5f5"></div>
<div class="a" style="left:54px;top:669px;width:1232px;height:17px;background:#f5f5f5"></div>
<div class="t" style="left:58px;top:621px;font-size:12px;letter-spacing:-0.15px">[18:12:01] [3D View 11] Color ramp shader loaded successfully</div>
<div class="t" style="left:58px;top:638px;font-size:12px;letter-spacing:-0.15px">[18:12:01] [3D View 11] Stereo mode: not supported</div>
<div class="t" style="left:58px;top:655px;font-size:12px;letter-spacing:-0.1px">[18:12:01] [ccGLWindow] 3D view initialized</div>
<div class="t" style="left:58px;top:672px;font-size:12px;letter-spacing:-0.14px">[18:12:01] [GL Filter] Filter initialized</div>
<svg class="a" style="left:1286px;top:617px" width="17" height="87" viewBox="1286 617 17 87">
<defs><linearGradient id="gthumb" x1="0" y1="0" x2="1" y2="0"><stop offset="0" stop-color="#f4f4f4"/><stop offset=".5" stop-color="#e4e4e4"/><stop offset="1" stop-color="#c8c8c8"/></linearGradient></defs>
<rect x="1286" y="617" width="16" height="86" fill="#eaeaea"/>
<path d="M1291 629 L1294.5 625 L1298 629 Z" fill="#333"/>
<path d="M1291 692 L1294.5 696 L1298 692 Z" fill="#333"/>
<rect x="1286.5" y="668.5" width="14" height="15" rx="1.5" fill="url(#gthumb)" stroke="#8a8a8a"/>
</svg>
<svg class="a" style="left:1300px;top:718px" width="12" height="14" viewBox="0 0 12 14"><g fill="#9a9a9a"><rect x="8" y="3" width="2" height="2"/><rect x="5" y="6" width="2" height="2"/><rect x="8" y="6" width="2" height="2"/><rect x="2" y="9" width="2" height="2"/><rect x="5" y="9" width="2" height="2"/><rect x="8" y="9" width="2" height="2"/></g></svg>

<!-- dialog -->
<div class="a" style="left:698px;top:180px;width:216px;height:128px;border-radius:8px;box-shadow:2px 3px 10px 2px rgba(0,6,12,0.35)"></div>
<div class="a" style="left:698px;top:180px;width:216px;height:128px;border-radius:7px;border:1px solid #0e1c26;background:radial-gradient(ellipse 48px 20px at 62px 14px,rgba(200,215,225,0.75) 0,rgba(160,185,200,0) 100%),linear-gradient(180deg,#6d90aa 0,#6088a4 26px,#4e7290 40px,#3f5f78 128px)"></div>
<div class="a" style="left:699px;top:181px;width:214px;height:126px;border-radius:6px;border:1px solid rgba(215,230,240,0.75)"></div>
<div class="a" style="left:704px;top:208px;width:204px;height:94px;border:1px solid #d4e0e8"></div>
<div class="a" style="left:705px;top:209px;width:202px;height:92px;border:1px solid #1a2a36;background:#f0f0f0;box-shadow:inset 0 0 0 1px #fbfbfb"></div>
<div class="a" style="left:706px;top:187px;width:16px;height:16px;background:#c4d4de"></div>
<svg class="a" style="left:707px;top:190px" width="15" height="11"><use href="#cc"/></svg>
<div class="t" style="left:727px;top:189px;font-size:12px;letter-spacing:-0.33px;color:#0a0a20">Thickness</div>
<svg class="a" style="left:829px;top:179px" width="80" height="24" viewBox="829 179 80 24">
<defs><linearGradient id="ghelp" x1="0" y1="0" x2="0" y2="1"><stop offset="0" stop-color="#d4dee6"/><stop offset=".48" stop-color="#aebfcc"/><stop offset=".52" stop-color="#5f7f98"/><stop offset="1" stop-color="#7898b0"/></linearGradient>
<linearGradient id="gclose" x1="0" y1="0" x2="0" y2="1"><stop offset="0" stop-color="#e0aca4"/><stop offset=".45" stop-color="#cc8a80"/><stop offset=".52" stop-color="#b8402c"/><stop offset="1" stop-color="#cc6a4c"/></linearGradient></defs>
<path d="M830.5,180 V195.5 Q830.5,200.5 835.5,200.5 H903.5 Q908.5,200.5 908.5,195.5 V180" fill="none" stroke="rgba(220,232,240,0.8)" stroke-width="1"/>
<path d="M831.5,180 V195 Q831.5,199.5 836,199.5 H859.5 V180 Z" fill="url(#ghelp)" stroke="#1a2a36" stroke-width="1"/>
<path d="M859.5,180 V199.5 H902.5 Q907.5,199.5 907.5,195 V180 Z" fill="url(#gclose)" stroke="#1a2a36" stroke-width="1"/>
<path d="M832.5,181.5 H858.5 M860.5,181.5 H906.5" stroke="#f4f8fa" stroke-width="1" opacity=".7"/>
<text x="840.5" y="195" font-family="Liberation Sans" font-weight="bold" font-size="12.5" fill="#fff" stroke="#2a3440" stroke-width="1.6" paint-order="stroke">?</text>
<path d="M878.5,184.5 L886.5,193.5 M886.5,184.5 L878.5,193.5" stroke="#3a2020" stroke-width="3.8"/>
<path d="M878.5,184.5 L886.5,193.5 M886.5,184.5 L878.5,193.5" stroke="#fff" stroke-width="2.4"/>
</svg>
<div class="t" style="left:716px;top:223px;font-size:11px;letter-spacing:-0.08px;color:#000">Distance to polyline:</div>
<div class="a" style="left:717px;top:240px;width:178px;height:20px;border:1px solid #abadb3;border-top-color:#3d5a75;border-left-color:#b5cfe7;border-right-color:#b5cfe7;border-bottom-color:#b5cfe7;background:#fff"></div>
<div class="t" style="left:720px;top:246px;font-size:11px;letter-spacing:-0.1px;color:#000">0.150000</div>
<div class="a" style="left:742px;top:244px;width:1px;height:13px;background:#000"></div>
<svg class="a" style="left:878px;top:241px" width="17" height="18" viewBox="878 241 17 18">
<rect x="879.5" y="242.5" width="14" height="7" fill="#f4f4f4" stroke="#c4c8cc"/><rect x="879.5" y="249.5" width="14" height="7" fill="#f4f4f4" stroke="#c4c8cc"/>
<path d="M883.5 247.5 L886.5 244.5 L889.5 247.5 Z" fill="#4a5aa0"/><path d="M883.5 251.5 L886.5 254.5 L889.5 251.5 Z" fill="#4a5aa0"/>
</svg>
<div class="a" style="left:740px;top:267px;width:73px;height:22px;border-radius:3px;border:1px solid #3c8cc8;background:linear-gradient(180deg,#f2f2f2 0,#ebebeb 45%,#dddddd 50%,#cfcfcf 100%);box-shadow:inset 0 0 0 1px #a8e0f8"></div>
<div class="t" style="left:768px;top:273px;font-size:11px;color:#000">OK</div>
<div class="a" style="left:821px;top:267px;width:73px;height:22px;border-radius:3px;border:1px solid #707070;background:linear-gradient(180deg,#f2f2f2 0,#ebebeb 45%,#dddddd 50%,#cfcfcf 100%);box-shadow:inset 0 0 0 1px #fcfcfc"></div>
<div class="t" style="left:840px;top:273px;font-size:11px;color:#000">Cancel</div>
</body></html>
